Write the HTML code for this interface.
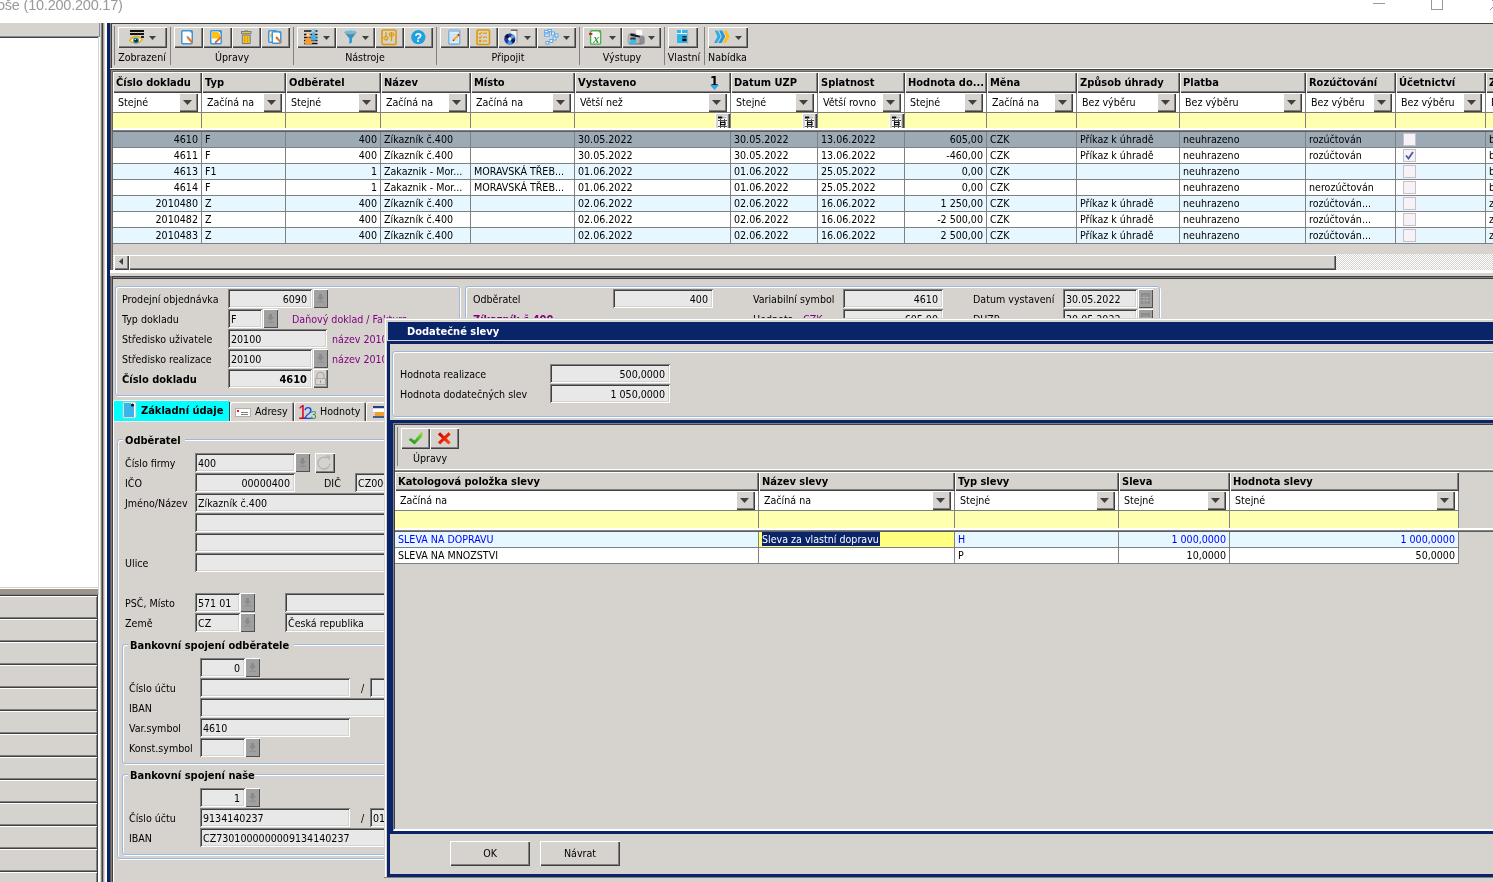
<!DOCTYPE html>
<html><head><meta charset="utf-8"><title>Dodatečné slevy</title>
<style>
html,body{margin:0;padding:0;}
body{width:1493px;height:882px;overflow:hidden;background:#fff;position:relative;
 font-family:"DejaVu Sans Condensed","Liberation Sans",sans-serif;font-size:10.6px;color:#000;}
.a{position:absolute;}
.t{white-space:nowrap;line-height:13px;height:13px;}
svg{display:block;overflow:visible}
</style></head><body>
<div id="root" class="a" style="left:0;top:0;width:1493px;height:882px;overflow:hidden;will-change:transform">

<div class="a" style="left:-3px;top:-6px;font-family:'Liberation Sans',sans-serif;font-size:14.5px;line-height:22px;color:#999;white-space:nowrap;letter-spacing:-0.22px">oše (10.200.200.17)</div>
<div class="a " style="left:1373px;top:3px;width:12px;height:1px;background:#999;"></div>
<div class="a " style="left:1431px;top:-2px;width:12px;height:12px;border:1px solid #999;box-sizing:border-box;"></div>
<svg class="a" style="left:1489px;top:-3px" width="14" height="14"><path d="M1,1 L13,13 M13,1 L1,13" stroke="#999" stroke-width="1" fill="none"/></svg>
<div class="a " style="left:0px;top:23px;width:99px;height:14px;background:#d6d3ce;"></div>
<div class="a " style="left:0px;top:36px;width:100px;height:1px;background:#868aa0;"></div>
<div class="a " style="left:99px;top:23px;width:1px;height:14px;background:#868aa0;"></div>
<div class="a " style="left:0px;top:37px;width:98px;height:550px;background:#fff;"></div>
<div class="a " style="left:0px;top:37px;width:98px;height:1px;background:#404040;"></div>
<div class="a " style="left:0px;top:587px;width:100px;height:1px;background:#d6d3ce;"></div>
<div class="a " style="left:0px;top:588px;width:100px;height:1px;background:#fff;"></div>
<div class="a " style="left:0px;top:589px;width:100px;height:5px;background:#9d958a;"></div>
<div class="a " style="left:0px;top:594px;width:100px;height:1px;background:#808088;"></div>
<div class="a " style="left:0px;top:595px;width:98px;height:23px;background:#d6d3ce;box-shadow: inset 0 1px 0 #404040, inset -1px 0 0 #404040, inset 0 -1px 0 #808080, inset 0 2px 0 #fff, inset -2px 0 0 #808080;"></div>
<div class="a " style="left:0px;top:618px;width:98px;height:23px;background:#d6d3ce;box-shadow: inset 0 1px 0 #404040, inset -1px 0 0 #404040, inset 0 -1px 0 #808080, inset 0 2px 0 #fff, inset -2px 0 0 #808080;"></div>
<div class="a " style="left:0px;top:641px;width:98px;height:23px;background:#d6d3ce;box-shadow: inset 0 1px 0 #404040, inset -1px 0 0 #404040, inset 0 -1px 0 #808080, inset 0 2px 0 #fff, inset -2px 0 0 #808080;"></div>
<div class="a " style="left:0px;top:664px;width:98px;height:23px;background:#d6d3ce;box-shadow: inset 0 1px 0 #404040, inset -1px 0 0 #404040, inset 0 -1px 0 #808080, inset 0 2px 0 #fff, inset -2px 0 0 #808080;"></div>
<div class="a " style="left:0px;top:687px;width:98px;height:23px;background:#d6d3ce;box-shadow: inset 0 1px 0 #404040, inset -1px 0 0 #404040, inset 0 -1px 0 #808080, inset 0 2px 0 #fff, inset -2px 0 0 #808080;"></div>
<div class="a " style="left:0px;top:710px;width:98px;height:23px;background:#d6d3ce;box-shadow: inset 0 1px 0 #404040, inset -1px 0 0 #404040, inset 0 -1px 0 #808080, inset 0 2px 0 #fff, inset -2px 0 0 #808080;"></div>
<div class="a " style="left:0px;top:733px;width:98px;height:23px;background:#d6d3ce;box-shadow: inset 0 1px 0 #404040, inset -1px 0 0 #404040, inset 0 -1px 0 #808080, inset 0 2px 0 #fff, inset -2px 0 0 #808080;"></div>
<div class="a " style="left:0px;top:756px;width:98px;height:23px;background:#d6d3ce;box-shadow: inset 0 1px 0 #404040, inset -1px 0 0 #404040, inset 0 -1px 0 #808080, inset 0 2px 0 #fff, inset -2px 0 0 #808080;"></div>
<div class="a " style="left:0px;top:779px;width:98px;height:23px;background:#d6d3ce;box-shadow: inset 0 1px 0 #404040, inset -1px 0 0 #404040, inset 0 -1px 0 #808080, inset 0 2px 0 #fff, inset -2px 0 0 #808080;"></div>
<div class="a " style="left:0px;top:802px;width:98px;height:23px;background:#d6d3ce;box-shadow: inset 0 1px 0 #404040, inset -1px 0 0 #404040, inset 0 -1px 0 #808080, inset 0 2px 0 #fff, inset -2px 0 0 #808080;"></div>
<div class="a " style="left:0px;top:825px;width:98px;height:23px;background:#d6d3ce;box-shadow: inset 0 1px 0 #404040, inset -1px 0 0 #404040, inset 0 -1px 0 #808080, inset 0 2px 0 #fff, inset -2px 0 0 #808080;"></div>
<div class="a " style="left:0px;top:848px;width:98px;height:23px;background:#d6d3ce;box-shadow: inset 0 1px 0 #404040, inset -1px 0 0 #404040, inset 0 -1px 0 #808080, inset 0 2px 0 #fff, inset -2px 0 0 #808080;"></div>
<div class="a " style="left:0px;top:871px;width:98px;height:23px;background:#d6d3ce;box-shadow: inset 0 1px 0 #404040, inset -1px 0 0 #404040, inset 0 -1px 0 #808080, inset 0 2px 0 #fff, inset -2px 0 0 #808080;"></div>
<div class="a " style="left:0px;top:595px;width:98px;height:1px;background:#404040;"></div>
<div class="a " style="left:98px;top:37px;width:1px;height:558px;background:#d8d5cf;"></div>
<div class="a " style="left:99px;top:37px;width:1px;height:558px;background:#fff;"></div>
<div class="a " style="left:100px;top:23px;width:1px;height:859px;background:#d6d3ce;"></div>
<div class="a " style="left:101px;top:23px;width:1px;height:859px;background:#808080;"></div>
<div class="a " style="left:102px;top:23px;width:1px;height:859px;background:#404040;"></div>
<div class="a " style="left:103px;top:23px;width:1px;height:859px;background:#a8a6a0;"></div>
<div class="a " style="left:104px;top:23px;width:1px;height:859px;background:#d6d3ce;"></div>
<div class="a " style="left:105px;top:23px;width:1px;height:859px;background:#fff;"></div>
<div class="a " style="left:106px;top:23px;width:1px;height:859px;background:#fff8f0;"></div>
<div class="a " style="left:107px;top:23px;width:3px;height:859px;background:#0a246a;"></div>
<div class="a " style="left:110px;top:23px;width:1383px;height:859px;background:#d6d3ce;"></div>
<div class="a " style="left:110px;top:23px;width:1383px;height:1px;background:#404040;"></div>
<div class="a " style="left:110px;top:23px;width:1px;height:45px;background:#808080;"></div>
<div class="a " style="left:111px;top:23px;width:1px;height:45px;background:#404040;"></div>
<div class="a " style="left:114px;top:26px;width:1px;height:39px;background:#808080;"></div>
<div class="a " style="left:118px;top:27px;width:49px;height:21px;background:#d6d3ce;box-shadow: inset 1px 1px 0 #fff, inset -1px -1px 0 #404040, inset -2px -2px 0 #808080;"></div>
<svg class="a" style="left:149px;top:36px" width="7" height="4"><polygon points="0,0 7,0 3.5,4" fill="#404040"/></svg>
<div class="a " style="left:170px;top:27px;width:1px;height:38px;background:#808080;"></div>
<div class="a " style="left:174px;top:27px;width:29px;height:21px;background:#d6d3ce;box-shadow: inset 1px 1px 0 #fff, inset -1px -1px 0 #404040, inset -2px -2px 0 #808080;"></div>
<div class="a " style="left:203px;top:27px;width:29px;height:21px;background:#d6d3ce;box-shadow: inset 1px 1px 0 #fff, inset -1px -1px 0 #404040, inset -2px -2px 0 #808080;"></div>
<div class="a " style="left:232px;top:27px;width:29px;height:21px;background:#d6d3ce;box-shadow: inset 1px 1px 0 #fff, inset -1px -1px 0 #404040, inset -2px -2px 0 #808080;"></div>
<div class="a " style="left:261px;top:27px;width:29px;height:21px;background:#d6d3ce;box-shadow: inset 1px 1px 0 #fff, inset -1px -1px 0 #404040, inset -2px -2px 0 #808080;"></div>
<div class="a " style="left:293px;top:27px;width:1px;height:38px;background:#808080;"></div>
<div class="a " style="left:297px;top:27px;width:39px;height:21px;background:#d6d3ce;box-shadow: inset 1px 1px 0 #fff, inset -1px -1px 0 #404040, inset -2px -2px 0 #808080;"></div>
<svg class="a" style="left:323px;top:36px" width="7" height="4"><polygon points="0,0 7,0 3.5,4" fill="#404040"/></svg>
<div class="a " style="left:336px;top:27px;width:39px;height:21px;background:#d6d3ce;box-shadow: inset 1px 1px 0 #fff, inset -1px -1px 0 #404040, inset -2px -2px 0 #808080;"></div>
<svg class="a" style="left:362px;top:36px" width="7" height="4"><polygon points="0,0 7,0 3.5,4" fill="#404040"/></svg>
<div class="a " style="left:375px;top:27px;width:29px;height:21px;background:#d6d3ce;box-shadow: inset 1px 1px 0 #fff, inset -1px -1px 0 #404040, inset -2px -2px 0 #808080;"></div>
<div class="a " style="left:404px;top:27px;width:29px;height:21px;background:#d6d3ce;box-shadow: inset 1px 1px 0 #fff, inset -1px -1px 0 #404040, inset -2px -2px 0 #808080;"></div>
<div class="a " style="left:436px;top:27px;width:1px;height:38px;background:#808080;"></div>
<div class="a " style="left:440px;top:27px;width:29px;height:21px;background:#d6d3ce;box-shadow: inset 1px 1px 0 #fff, inset -1px -1px 0 #404040, inset -2px -2px 0 #808080;"></div>
<div class="a " style="left:469px;top:27px;width:29px;height:21px;background:#d6d3ce;box-shadow: inset 1px 1px 0 #fff, inset -1px -1px 0 #404040, inset -2px -2px 0 #808080;"></div>
<div class="a " style="left:498px;top:27px;width:39px;height:21px;background:#d6d3ce;box-shadow: inset 1px 1px 0 #fff, inset -1px -1px 0 #404040, inset -2px -2px 0 #808080;"></div>
<svg class="a" style="left:524px;top:36px" width="7" height="4"><polygon points="0,0 7,0 3.5,4" fill="#404040"/></svg>
<div class="a " style="left:537px;top:27px;width:39px;height:21px;background:#d6d3ce;box-shadow: inset 1px 1px 0 #fff, inset -1px -1px 0 #404040, inset -2px -2px 0 #808080;"></div>
<svg class="a" style="left:563px;top:36px" width="7" height="4"><polygon points="0,0 7,0 3.5,4" fill="#404040"/></svg>
<div class="a " style="left:579px;top:27px;width:1px;height:38px;background:#808080;"></div>
<div class="a " style="left:583px;top:27px;width:39px;height:21px;background:#d6d3ce;box-shadow: inset 1px 1px 0 #fff, inset -1px -1px 0 #404040, inset -2px -2px 0 #808080;"></div>
<svg class="a" style="left:609px;top:36px" width="7" height="4"><polygon points="0,0 7,0 3.5,4" fill="#404040"/></svg>
<div class="a " style="left:622px;top:27px;width:39px;height:21px;background:#d6d3ce;box-shadow: inset 1px 1px 0 #fff, inset -1px -1px 0 #404040, inset -2px -2px 0 #808080;"></div>
<svg class="a" style="left:648px;top:36px" width="7" height="4"><polygon points="0,0 7,0 3.5,4" fill="#404040"/></svg>
<div class="a " style="left:664px;top:27px;width:1px;height:38px;background:#808080;"></div>
<div class="a " style="left:668px;top:27px;width:30px;height:21px;background:#d6d3ce;box-shadow: inset 1px 1px 0 #fff, inset -1px -1px 0 #404040, inset -2px -2px 0 #808080;"></div>
<div class="a " style="left:704px;top:27px;width:1px;height:38px;background:#808080;"></div>
<div class="a " style="left:708px;top:27px;width:40px;height:21px;background:#d6d3ce;box-shadow: inset 1px 1px 0 #fff, inset -1px -1px 0 #404040, inset -2px -2px 0 #808080;"></div>
<svg class="a" style="left:735px;top:36px" width="7" height="4"><polygon points="0,0 7,0 3.5,4" fill="#404040"/></svg>
<div class="a t" style="top:51px;left:-8px;width:300px;text-align:center;">Zobrazení</div>
<div class="a t" style="top:51px;left:82px;width:300px;text-align:center;">Úpravy</div>
<div class="a t" style="top:51px;left:215px;width:300px;text-align:center;">Nástroje</div>
<div class="a t" style="top:51px;left:358px;width:300px;text-align:center;">Připojit</div>
<div class="a t" style="top:51px;left:472px;width:300px;text-align:center;">Výstupy</div>
<div class="a t" style="top:51px;left:534px;width:300px;text-align:center;">Vlastní</div>
<div class="a t" style="top:51px;left:577.5px;width:300px;text-align:center;">Nabídka</div>
<svg class="a" style="left:129px;top:30px" width="16" height="16" viewBox="0 0 16 16"><rect x="1" y="0" width="14" height="2" fill="#111"/><rect x="1" y="3" width="14" height="2" fill="#111"/><rect x="12" y="6" width="3" height="2" fill="#222"/><path d="M0.5,10.5 Q7,3.5 13.5,9.5 Q7,17 0.5,10.5 Z" fill="#fff4c0" stroke="#e0b020" stroke-width="1.2"/><path d="M1,8.5 Q6,4.5 11,7" fill="none" stroke="#e0b020" stroke-width="1"/><circle cx="7" cy="10.5" r="3" fill="#2a88b8"/><circle cx="7" cy="10.5" r="1.6" fill="#081018"/><circle cx="6.3" cy="9.6" r="0.7" fill="#fff"/></svg>
<svg class="a" style="left:181px;top:30px" width="13" height="15" viewBox="0 0 13 15"><rect x="0.75" y="0.75" width="10.5" height="13" rx="1.2" fill="#fff" stroke="#3d95dc" stroke-width="1.5"/><polygon points="8,0.5 11.5,0.5 11.5,4" fill="#3d95dc"/><polygon points="8,1 8,4 11,4" fill="#eaf4fc"/><path d="M6.5,7 L11.5,13" stroke="#e8741c" stroke-width="2"/><path d="M5.8,6.2 L7,7.6" stroke="#c8a060" stroke-width="1.6"/></svg>
<svg class="a" style="left:210px;top:30px" width="13" height="15" viewBox="0 0 13 15"><rect x="0.75" y="0.75" width="10.5" height="13" rx="1.2" fill="#fff" stroke="#3d95dc" stroke-width="1.5"/><path d="M2,2 H8 L10,4 V8.5 H2 Z" fill="#ffc210"/><polygon points="8,0.5 11.5,0.5 11.5,4" fill="#3d95dc"/><path d="M11,7 L6,12" stroke="#e8741c" stroke-width="2"/><path d="M5.2,12.8 L6.4,11.6" stroke="#806040" stroke-width="1.4"/></svg>
<svg class="a" style="left:241px;top:30px" width="11" height="15" viewBox="0 0 11 15"><rect x="3.5" y="0" width="3.5" height="1.6" fill="#e0a800"/><rect x="0.5" y="1.5" width="9.5" height="2.2" fill="#ffc210" stroke="#5a7cb4" stroke-width="0.9"/><path d="M1.3,5 H9.2 V13.6 H1.3 Z" fill="#ffc210" stroke="#5a7cb4" stroke-width="1"/><path d="M3.9,6.2 V12.5 M6.6,6.2 V12.5" stroke="#d89a00" stroke-width="0.9"/></svg>
<svg class="a" style="left:268px;top:30px" width="14" height="15" viewBox="0 0 14 15"><rect x="0.75" y="0.75" width="8" height="11.5" rx="1" fill="#fff" stroke="#3d95dc" stroke-width="1.5"/><rect x="1.6" y="3.5" width="2" height="4" fill="#ffd040"/><rect x="4.25" y="1.75" width="8.5" height="11.5" rx="1" fill="#fff" stroke="#3d95dc" stroke-width="1.5"/><polygon points="10,1.5 13,1.5 13,4.5" fill="#3d95dc"/><path d="M8.5,7.5 L13,12.5" stroke="#e8741c" stroke-width="1.9"/><path d="M8,7 L9,8" stroke="#806040" stroke-width="1.4"/></svg>
<svg class="a" style="left:303px;top:29px" width="16" height="16" viewBox="0 0 16 16"><path d="M1,2 H14.5 M1,5.5 H14.5 M1,8.5 H14.5 M1,11.5 H14.5 M1,14.5 H14.5" stroke="#111" stroke-width="1.4"/><circle cx="10.5" cy="2.4" r="2.3" fill="#6fc0ea"/><path d="M7.3,11 Q7.6,4.5 10.5,4.5 Q13.4,4.5 13.8,11 Q10.5,12.4 7.3,11 Z" fill="#48aee4"/><circle cx="5.3" cy="6.2" r="2.3" fill="#ffb060"/><path d="M1.6,15 Q2.2,8.3 5.3,8.3 Q8.4,8.3 9,15 Z" fill="#ff9a2e"/><circle cx="4.8" cy="5.6" r="0.9" fill="#fff"/><circle cx="10" cy="1.8" r="0.8" fill="#fff" opacity=".8"/></svg>
<svg class="a" style="left:344px;top:30px" width="13" height="15" viewBox="0 0 13 15"><path d="M0.3,2.2 Q6.5,-0.8 12.7,2.2 L7.9,8.5 V12.5 L5.4,14 V8.5 Z" fill="#2c92d4"/><ellipse cx="6.5" cy="2.3" rx="6" ry="1.7" fill="#63bdf0"/><path d="M1,3.2 Q6.5,5 12,3.2" fill="none" stroke="#e0a030" stroke-width="0.8"/></svg>
<svg class="a" style="left:381px;top:29px" width="16" height="17" viewBox="0 0 16 17"><rect x="1" y="1" width="14" height="14.5" rx="1.5" fill="none" stroke="#e09a00" stroke-width="1.6"/><path d="M5,3 V8 M10.5,3 V12" stroke="#e09a00" stroke-width="1.3"/><ellipse cx="5" cy="9" rx="2.2" ry="1.4" fill="none" stroke="#e09a00" stroke-width="1.1"/><path d="M3.6,10.5 L5,12.3 L6.4,10.5" fill="#e09a00"/><ellipse cx="10.5" cy="5.4" rx="2.2" ry="1.6" fill="none" stroke="#e09a00" stroke-width="1.1"/></svg>
<svg class="a" style="left:411px;top:30px" width="15" height="15" viewBox="0 0 15 15"><circle cx="7.3" cy="7.2" r="7.1" fill="#1fa0e2"/><text x="7.3" y="11.6" text-anchor="middle" font-family="Liberation Sans,sans-serif" font-weight="bold" font-size="12.5" fill="#fff">?</text></svg>
<svg class="a" style="left:448px;top:29px" width="13" height="16" viewBox="0 0 13 16"><rect x="0.8" y="1.2" width="11" height="14" rx="1.2" fill="#dcecfc" stroke="#6aa8e0" stroke-width="1.2"/><rect x="1.5" y="1" width="9.6" height="2" fill="#9cc4ec"/><path d="M2.5,6 H10 M2.5,8.5 H10 M2.5,11 H10" stroke="#b8d4f0" stroke-width="0.8"/><path d="M10.6,6 L5.6,11" stroke="#f6b418" stroke-width="2.2"/><path d="M11.2,5.4 L10,6.6" stroke="#d03030" stroke-width="2.2"/><path d="M5,11.7 L5.8,10.8" stroke="#604020" stroke-width="1.4"/></svg>
<svg class="a" style="left:476px;top:29px" width="15" height="17" viewBox="0 0 15 17"><rect x="1" y="1" width="12.5" height="14.5" rx="1.2" fill="none" stroke="#e09a00" stroke-width="1.6"/><path d="M6.8,4.3 H11 M6.8,8.2 H11 M6.8,12.1 H11" stroke="#e8a820" stroke-width="1.5"/><path d="M2.8,4 L4,5.3 L5.8,3 M2.8,8 L4,9.3 L5.8,7" stroke="#e09a00" stroke-width="1.1" fill="none"/><circle cx="4.2" cy="12.1" r="1.4" fill="#e09a00"/></svg>
<svg class="a" style="left:504px;top:29px" width="16" height="16" viewBox="0 0 16 16"><path d="M6,1 H13.5 V14 H9 Z" fill="#f2f2f2" stroke="#c0c0c0" stroke-width="0.8"/><rect x="12.3" y="2" width="1.4" height="12" fill="#b0b0b0"/><path d="M7,1.2 H13.5" stroke="#303030" stroke-width="1"/><circle cx="5.8" cy="10" r="5.6" fill="#1a3c9c"/><path d="M5.8,10 L0.5,8 A5.6,5.6 0 0 1 4,4.7 Z" fill="#0a1440"/><path d="M5.8,10 L8,4.9 A5.6,5.6 0 0 1 11.2,8.4 Z" fill="#58a8e8"/><path d="M5.8,10 L3,14.8 A5.6,5.6 0 0 0 8.5,14.9 Z" fill="#4a9ce0"/><path d="M5.8,10 L11.3,11 A5.6,5.6 0 0 1 9.5,14.2 Z" fill="#101850"/><circle cx="5.8" cy="10" r="1.7" fill="#fff8d8"/></svg>
<svg class="a" style="left:544px;top:29px" width="15" height="16" viewBox="0 0 15 16"><g fill="#eaf4ff" stroke="#5aa4e8" stroke-width="0.9"><rect x="0.5" y="1.5" width="5" height="2.2"/><rect x="0.5" y="5" width="5" height="2.2"/><rect x="4" y="0.5" width="3.5" height="2"/><rect x="7.5" y="3" width="3" height="3"/><rect x="11" y="5" width="3" height="3"/><rect x="9" y="8" width="3" height="3"/><rect x="5.8" y="10.5" width="3" height="3"/><rect x="2" y="12.5" width="2.8" height="2.6"/></g></svg>
<svg class="a" style="left:589px;top:30px" width="13" height="15" viewBox="0 0 13 15"><rect x="1.6" y="0.7" width="10" height="13.4" rx="1.2" fill="#fff" stroke="#4cae4c" stroke-width="1.4"/><polygon points="8.5,0.5 12,0.5 12,4" fill="#4cae4c"/><polygon points="8.5,1 8.5,4 11.5,4" fill="#e8f6e8"/><rect x="0" y="3" width="3.4" height="1.8" fill="#e01010"/><text x="7.2" y="12.6" text-anchor="middle" font-family="Liberation Serif,serif" font-weight="bold" font-style="italic" font-size="12" fill="#2e9a3a">x</text></svg>
<svg class="a" style="left:627px;top:28px" width="18" height="17" viewBox="0 0 18 17"><polygon points="8.3,1.2 15.6,1.6 15.9,8 8.6,7.4" fill="#fbfbfd" stroke="#c4c4cc" stroke-width="0.6"/><path d="M1,9 Q1,5.6 4,5.6 L8.5,5.6 L9,7.6 L16,7.9 Q17.4,8.1 17.4,10 V14.6 Q17.4,16.3 15.5,16.3 H3 Q1,16.3 1,14.6 Z" fill="#b6b6ba" stroke="#9a9aa2" stroke-width="0.7"/><path d="M12.4,8.2 L16,7.9 Q17.4,8.1 17.4,10 V14.6 Q17.4,16.3 15.5,16.3 H12.4 Z" fill="#8a8a90"/><path d="M3.2,6.6 Q3.4,5.3 5,5.6 L12.4,7.8 Q13.4,8.4 12.8,9.6 L4,7.9 Q3,7.5 3.2,6.6 Z" fill="#1a1a1a"/><rect x="3.4" y="9.6" width="5.2" height="2.2" fill="#2c2c2c"/><path d="M2.2,15.4 H14 V16.3 H3 Z" fill="#707078"/><polygon points="4.6,11.2 9.7,12 8,16.4 1.8,15.3" fill="#30bef0"/></svg>
<svg class="a" style="left:677px;top:30px" width="12" height="14" viewBox="0 0 12 14"><rect x="0" y="0" width="11" height="14" fill="#2cb8ea"/><rect x="10" y="1" width="1.2" height="13" fill="#b0b0b0"/><path d="M0,3.6 H10 M4.5,0 V3.6" stroke="#fff" stroke-width="1"/><path d="M0,13.6 H10" stroke="#ffe0e0" stroke-width="0.8"/><rect x="5.3" y="6" width="4.2" height="1.6" fill="#0a3040"/><rect x="5.3" y="8.6" width="4.2" height="2.6" fill="#05080c"/></svg>
<svg class="a" style="left:714px;top:30px" width="16" height="14" viewBox="0 0 16 14"><polygon points="0.8,0.5 3.8,0.5 6.8,6.6 3.2,13 0,13 3.4,6.6" fill="#2aaeea"/><polygon points="5.2,0.5 8.2,0.5 11.2,6.6 7.6000000000000005,13 4.4,13 7.800000000000001,6.6" fill="#2398dc"/><polygon points="9.600000000000001,0.5 12.600000000000001,0.5 15.600000000000001,6.6 12.0,13 8.8,13 12.200000000000001,6.6" fill="#ffc116"/></svg>
<div class="a " style="left:110px;top:68px;width:1383px;height:1px;background:#fff;"></div>
<div class="a " style="left:111px;top:69px;width:1382px;height:1px;background:#404040;"></div>
<div class="a " style="left:111px;top:70px;width:1382px;height:1px;background:#908e88;"></div>
<div class="a " style="left:111px;top:71px;width:1382px;height:1px;background:#646864;"></div>
<div class="a " style="left:110px;top:69px;width:1px;height:201px;background:#404040;"></div>
<div class="a " style="left:111px;top:70px;width:1px;height:200px;background:#908e88;"></div>
<div class="a " style="left:112px;top:71px;width:1px;height:199px;background:#646864;"></div>
<div class="a " style="left:113px;top:72px;width:89px;height:21px;background:#d6d3ce;box-shadow: inset 1px 1px 0 #fff, inset -1px -1px 0 #404040, inset -2px -2px 0 #808080;"></div>
<div class="a t" style="top:76px;left:116px;font-weight:bold;font-size:11px;">Číslo dokladu</div>
<div class="a " style="left:202px;top:72px;width:84px;height:21px;background:#d6d3ce;box-shadow: inset 1px 1px 0 #fff, inset -1px -1px 0 #404040, inset -2px -2px 0 #808080;"></div>
<div class="a t" style="top:76px;left:205px;font-weight:bold;font-size:11px;">Typ</div>
<div class="a " style="left:286px;top:72px;width:95px;height:21px;background:#d6d3ce;box-shadow: inset 1px 1px 0 #fff, inset -1px -1px 0 #404040, inset -2px -2px 0 #808080;"></div>
<div class="a t" style="top:76px;left:289px;font-weight:bold;font-size:11px;">Odběratel</div>
<div class="a " style="left:381px;top:72px;width:90px;height:21px;background:#d6d3ce;box-shadow: inset 1px 1px 0 #fff, inset -1px -1px 0 #404040, inset -2px -2px 0 #808080;"></div>
<div class="a t" style="top:76px;left:384px;font-weight:bold;font-size:11px;">Název</div>
<div class="a " style="left:471px;top:72px;width:104px;height:21px;background:#d6d3ce;box-shadow: inset 1px 1px 0 #fff, inset -1px -1px 0 #404040, inset -2px -2px 0 #808080;"></div>
<div class="a t" style="top:76px;left:474px;font-weight:bold;font-size:11px;">Místo</div>
<div class="a " style="left:575px;top:72px;width:156px;height:21px;background:#d6d3ce;box-shadow: inset 1px 1px 0 #fff, inset -1px -1px 0 #404040, inset -2px -2px 0 #808080;"></div>
<div class="a t" style="top:76px;left:578px;font-weight:bold;font-size:11px;">Vystaveno</div>
<div class="a " style="left:731px;top:72px;width:87px;height:21px;background:#d6d3ce;box-shadow: inset 1px 1px 0 #fff, inset -1px -1px 0 #404040, inset -2px -2px 0 #808080;"></div>
<div class="a t" style="top:76px;left:734px;font-weight:bold;font-size:11px;">Datum UZP</div>
<div class="a " style="left:818px;top:72px;width:87px;height:21px;background:#d6d3ce;box-shadow: inset 1px 1px 0 #fff, inset -1px -1px 0 #404040, inset -2px -2px 0 #808080;"></div>
<div class="a t" style="top:76px;left:821px;font-weight:bold;font-size:11px;">Splatnost</div>
<div class="a " style="left:905px;top:72px;width:82px;height:21px;background:#d6d3ce;box-shadow: inset 1px 1px 0 #fff, inset -1px -1px 0 #404040, inset -2px -2px 0 #808080;"></div>
<div class="a t" style="top:76px;left:908px;font-weight:bold;font-size:11px;">Hodnota do...</div>
<div class="a " style="left:987px;top:72px;width:90px;height:21px;background:#d6d3ce;box-shadow: inset 1px 1px 0 #fff, inset -1px -1px 0 #404040, inset -2px -2px 0 #808080;"></div>
<div class="a t" style="top:76px;left:990px;font-weight:bold;font-size:11px;">Měna</div>
<div class="a " style="left:1077px;top:72px;width:103px;height:21px;background:#d6d3ce;box-shadow: inset 1px 1px 0 #fff, inset -1px -1px 0 #404040, inset -2px -2px 0 #808080;"></div>
<div class="a t" style="top:76px;left:1080px;font-weight:bold;font-size:11px;">Způsob úhrady</div>
<div class="a " style="left:1180px;top:72px;width:126px;height:21px;background:#d6d3ce;box-shadow: inset 1px 1px 0 #fff, inset -1px -1px 0 #404040, inset -2px -2px 0 #808080;"></div>
<div class="a t" style="top:76px;left:1183px;font-weight:bold;font-size:11px;">Platba</div>
<div class="a " style="left:1306px;top:72px;width:90px;height:21px;background:#d6d3ce;box-shadow: inset 1px 1px 0 #fff, inset -1px -1px 0 #404040, inset -2px -2px 0 #808080;"></div>
<div class="a t" style="top:76px;left:1309px;font-weight:bold;font-size:11px;">Rozúčtování</div>
<div class="a " style="left:1396px;top:72px;width:90px;height:21px;background:#d6d3ce;box-shadow: inset 1px 1px 0 #fff, inset -1px -1px 0 #404040, inset -2px -2px 0 #808080;"></div>
<div class="a t" style="top:76px;left:1399px;font-weight:bold;font-size:11px;">Účetnictví</div>
<div class="a " style="left:1486px;top:72px;width:115px;height:21px;background:#d6d3ce;box-shadow: inset 1px 1px 0 #fff, inset -1px -1px 0 #404040, inset -2px -2px 0 #808080;"></div>
<div class="a t" style="top:76px;left:1489px;font-weight:bold;font-size:11px;">Z</div>
<div class="a " style="left:113px;top:93px;width:88px;height:19px;background:#fff;"></div>
<div class="a " style="left:201px;top:93px;width:1px;height:19px;background:#808080;"></div>
<div class="a t" style="top:96px;left:118px;">Stejné</div>
<div class="a " style="left:179px;top:93px;width:19px;height:19px;background:#d6d3ce;box-shadow: inset 1px 1px 0 #fff, inset -1px -1px 0 #404040, inset -2px -2px 0 #808080;"></div>
<svg class="a" style="left:183px;top:100px" width="9" height="5"><polygon points="0,0 9,0 4.5,5" fill="#404040"/></svg>
<div class="a " style="left:202px;top:93px;width:83px;height:19px;background:#fff;"></div>
<div class="a " style="left:285px;top:93px;width:1px;height:19px;background:#808080;"></div>
<div class="a t" style="top:96px;left:207px;">Začíná na</div>
<div class="a " style="left:263px;top:93px;width:19px;height:19px;background:#d6d3ce;box-shadow: inset 1px 1px 0 #fff, inset -1px -1px 0 #404040, inset -2px -2px 0 #808080;"></div>
<svg class="a" style="left:267px;top:100px" width="9" height="5"><polygon points="0,0 9,0 4.5,5" fill="#404040"/></svg>
<div class="a " style="left:286px;top:93px;width:94px;height:19px;background:#fff;"></div>
<div class="a " style="left:380px;top:93px;width:1px;height:19px;background:#808080;"></div>
<div class="a t" style="top:96px;left:291px;">Stejné</div>
<div class="a " style="left:358px;top:93px;width:19px;height:19px;background:#d6d3ce;box-shadow: inset 1px 1px 0 #fff, inset -1px -1px 0 #404040, inset -2px -2px 0 #808080;"></div>
<svg class="a" style="left:362px;top:100px" width="9" height="5"><polygon points="0,0 9,0 4.5,5" fill="#404040"/></svg>
<div class="a " style="left:381px;top:93px;width:89px;height:19px;background:#fff;"></div>
<div class="a " style="left:470px;top:93px;width:1px;height:19px;background:#808080;"></div>
<div class="a t" style="top:96px;left:386px;">Začíná na</div>
<div class="a " style="left:448px;top:93px;width:19px;height:19px;background:#d6d3ce;box-shadow: inset 1px 1px 0 #fff, inset -1px -1px 0 #404040, inset -2px -2px 0 #808080;"></div>
<svg class="a" style="left:452px;top:100px" width="9" height="5"><polygon points="0,0 9,0 4.5,5" fill="#404040"/></svg>
<div class="a " style="left:471px;top:93px;width:103px;height:19px;background:#fff;"></div>
<div class="a " style="left:574px;top:93px;width:1px;height:19px;background:#808080;"></div>
<div class="a t" style="top:96px;left:476px;">Začíná na</div>
<div class="a " style="left:552px;top:93px;width:19px;height:19px;background:#d6d3ce;box-shadow: inset 1px 1px 0 #fff, inset -1px -1px 0 #404040, inset -2px -2px 0 #808080;"></div>
<svg class="a" style="left:556px;top:100px" width="9" height="5"><polygon points="0,0 9,0 4.5,5" fill="#404040"/></svg>
<div class="a " style="left:575px;top:93px;width:155px;height:19px;background:#fff;"></div>
<div class="a " style="left:730px;top:93px;width:1px;height:19px;background:#808080;"></div>
<div class="a t" style="top:96px;left:580px;">Větší než</div>
<div class="a " style="left:708px;top:93px;width:19px;height:19px;background:#d6d3ce;box-shadow: inset 1px 1px 0 #fff, inset -1px -1px 0 #404040, inset -2px -2px 0 #808080;"></div>
<svg class="a" style="left:712px;top:100px" width="9" height="5"><polygon points="0,0 9,0 4.5,5" fill="#404040"/></svg>
<div class="a " style="left:731px;top:93px;width:86px;height:19px;background:#fff;"></div>
<div class="a " style="left:817px;top:93px;width:1px;height:19px;background:#808080;"></div>
<div class="a t" style="top:96px;left:736px;">Stejné</div>
<div class="a " style="left:795px;top:93px;width:19px;height:19px;background:#d6d3ce;box-shadow: inset 1px 1px 0 #fff, inset -1px -1px 0 #404040, inset -2px -2px 0 #808080;"></div>
<svg class="a" style="left:799px;top:100px" width="9" height="5"><polygon points="0,0 9,0 4.5,5" fill="#404040"/></svg>
<div class="a " style="left:818px;top:93px;width:86px;height:19px;background:#fff;"></div>
<div class="a " style="left:904px;top:93px;width:1px;height:19px;background:#808080;"></div>
<div class="a t" style="top:96px;left:823px;">Větší rovno</div>
<div class="a " style="left:882px;top:93px;width:19px;height:19px;background:#d6d3ce;box-shadow: inset 1px 1px 0 #fff, inset -1px -1px 0 #404040, inset -2px -2px 0 #808080;"></div>
<svg class="a" style="left:886px;top:100px" width="9" height="5"><polygon points="0,0 9,0 4.5,5" fill="#404040"/></svg>
<div class="a " style="left:905px;top:93px;width:81px;height:19px;background:#fff;"></div>
<div class="a " style="left:986px;top:93px;width:1px;height:19px;background:#808080;"></div>
<div class="a t" style="top:96px;left:910px;">Stejné</div>
<div class="a " style="left:964px;top:93px;width:19px;height:19px;background:#d6d3ce;box-shadow: inset 1px 1px 0 #fff, inset -1px -1px 0 #404040, inset -2px -2px 0 #808080;"></div>
<svg class="a" style="left:968px;top:100px" width="9" height="5"><polygon points="0,0 9,0 4.5,5" fill="#404040"/></svg>
<div class="a " style="left:987px;top:93px;width:89px;height:19px;background:#fff;"></div>
<div class="a " style="left:1076px;top:93px;width:1px;height:19px;background:#808080;"></div>
<div class="a t" style="top:96px;left:992px;">Začíná na</div>
<div class="a " style="left:1054px;top:93px;width:19px;height:19px;background:#d6d3ce;box-shadow: inset 1px 1px 0 #fff, inset -1px -1px 0 #404040, inset -2px -2px 0 #808080;"></div>
<svg class="a" style="left:1058px;top:100px" width="9" height="5"><polygon points="0,0 9,0 4.5,5" fill="#404040"/></svg>
<div class="a " style="left:1077px;top:93px;width:102px;height:19px;background:#fff;"></div>
<div class="a " style="left:1179px;top:93px;width:1px;height:19px;background:#808080;"></div>
<div class="a t" style="top:96px;left:1082px;">Bez výběru</div>
<div class="a " style="left:1157px;top:93px;width:19px;height:19px;background:#d6d3ce;box-shadow: inset 1px 1px 0 #fff, inset -1px -1px 0 #404040, inset -2px -2px 0 #808080;"></div>
<svg class="a" style="left:1161px;top:100px" width="9" height="5"><polygon points="0,0 9,0 4.5,5" fill="#404040"/></svg>
<div class="a " style="left:1180px;top:93px;width:125px;height:19px;background:#fff;"></div>
<div class="a " style="left:1305px;top:93px;width:1px;height:19px;background:#808080;"></div>
<div class="a t" style="top:96px;left:1185px;">Bez výběru</div>
<div class="a " style="left:1283px;top:93px;width:19px;height:19px;background:#d6d3ce;box-shadow: inset 1px 1px 0 #fff, inset -1px -1px 0 #404040, inset -2px -2px 0 #808080;"></div>
<svg class="a" style="left:1287px;top:100px" width="9" height="5"><polygon points="0,0 9,0 4.5,5" fill="#404040"/></svg>
<div class="a " style="left:1306px;top:93px;width:89px;height:19px;background:#fff;"></div>
<div class="a " style="left:1395px;top:93px;width:1px;height:19px;background:#808080;"></div>
<div class="a t" style="top:96px;left:1311px;">Bez výběru</div>
<div class="a " style="left:1373px;top:93px;width:19px;height:19px;background:#d6d3ce;box-shadow: inset 1px 1px 0 #fff, inset -1px -1px 0 #404040, inset -2px -2px 0 #808080;"></div>
<svg class="a" style="left:1377px;top:100px" width="9" height="5"><polygon points="0,0 9,0 4.5,5" fill="#404040"/></svg>
<div class="a " style="left:1396px;top:93px;width:89px;height:19px;background:#fff;"></div>
<div class="a " style="left:1485px;top:93px;width:1px;height:19px;background:#808080;"></div>
<div class="a t" style="top:96px;left:1401px;">Bez výběru</div>
<div class="a " style="left:1463px;top:93px;width:19px;height:19px;background:#d6d3ce;box-shadow: inset 1px 1px 0 #fff, inset -1px -1px 0 #404040, inset -2px -2px 0 #808080;"></div>
<svg class="a" style="left:1467px;top:100px" width="9" height="5"><polygon points="0,0 9,0 4.5,5" fill="#404040"/></svg>
<div class="a " style="left:1486px;top:93px;width:114px;height:19px;background:#fff;"></div>
<div class="a " style="left:1600px;top:93px;width:1px;height:19px;background:#808080;"></div>
<div class="a t" style="top:96px;left:1491px;">B</div>
<div class="a t" style="top:75px;left:710px;font-weight:bold;font-size:13.7px;">1</div>
<svg class="a" style="left:710px;top:85px" width="9" height="5"><polygon points="0,0 9,0 4.5,5" fill="#2aa8f0"/></svg>
<div class="a " style="left:113px;top:112px;width:1380px;height:1px;background:#808080;"></div>
<div class="a " style="left:113px;top:113px;width:1380px;height:15px;background:#ffffb0;"></div>
<div class="a " style="left:201px;top:113px;width:1px;height:15px;background:#808080;"></div>
<div class="a " style="left:285px;top:113px;width:1px;height:15px;background:#808080;"></div>
<div class="a " style="left:380px;top:113px;width:1px;height:15px;background:#808080;"></div>
<div class="a " style="left:470px;top:113px;width:1px;height:15px;background:#808080;"></div>
<div class="a " style="left:574px;top:113px;width:1px;height:15px;background:#808080;"></div>
<div class="a " style="left:730px;top:113px;width:1px;height:15px;background:#808080;"></div>
<div class="a " style="left:817px;top:113px;width:1px;height:15px;background:#808080;"></div>
<div class="a " style="left:904px;top:113px;width:1px;height:15px;background:#808080;"></div>
<div class="a " style="left:986px;top:113px;width:1px;height:15px;background:#808080;"></div>
<div class="a " style="left:1076px;top:113px;width:1px;height:15px;background:#808080;"></div>
<div class="a " style="left:1179px;top:113px;width:1px;height:15px;background:#808080;"></div>
<div class="a " style="left:1305px;top:113px;width:1px;height:15px;background:#808080;"></div>
<div class="a " style="left:1395px;top:113px;width:1px;height:15px;background:#808080;"></div>
<div class="a " style="left:1485px;top:113px;width:1px;height:15px;background:#808080;"></div>
<div class="a " style="left:1600px;top:113px;width:1px;height:15px;background:#808080;"></div>
<div class="a " style="left:715px;top:113px;width:15px;height:15px;background:#d6d3ce;box-shadow: inset 1px 1px 0 #fff, inset -1px 0 0 #404040, inset -2px 0 0 #808080;"></div>
<svg class="a" style="left:718px;top:116px" width="9" height="12"><rect x="0" y="0" width="9" height="12" fill="#fff"/><rect x="0" y="0.5" width="4.5" height="2" fill="#000"/><rect x="4.5" y="0.5" width="4" height="2" fill="#b8b8b8"/><path d="M0,4.5 H9 M0,10.5 H9 M2.5,3 V12 M6.5,3 V12" stroke="#505050" stroke-width="1" fill="none"/><rect x="2.5" y="6.3" width="4.5" height="2.4" fill="#fff" stroke="#000" stroke-width="1.2"/></svg>
<div class="a " style="left:802px;top:113px;width:15px;height:15px;background:#d6d3ce;box-shadow: inset 1px 1px 0 #fff, inset -1px 0 0 #404040, inset -2px 0 0 #808080;"></div>
<svg class="a" style="left:805px;top:116px" width="9" height="12"><rect x="0" y="0" width="9" height="12" fill="#fff"/><rect x="0" y="0.5" width="4.5" height="2" fill="#000"/><rect x="4.5" y="0.5" width="4" height="2" fill="#b8b8b8"/><path d="M0,4.5 H9 M0,10.5 H9 M2.5,3 V12 M6.5,3 V12" stroke="#505050" stroke-width="1" fill="none"/><rect x="2.5" y="6.3" width="4.5" height="2.4" fill="#fff" stroke="#000" stroke-width="1.2"/></svg>
<div class="a " style="left:889px;top:113px;width:15px;height:15px;background:#d6d3ce;box-shadow: inset 1px 1px 0 #fff, inset -1px 0 0 #404040, inset -2px 0 0 #808080;"></div>
<svg class="a" style="left:892px;top:116px" width="9" height="12"><rect x="0" y="0" width="9" height="12" fill="#fff"/><rect x="0" y="0.5" width="4.5" height="2" fill="#000"/><rect x="4.5" y="0.5" width="4" height="2" fill="#b8b8b8"/><path d="M0,4.5 H9 M0,10.5 H9 M2.5,3 V12 M6.5,3 V12" stroke="#505050" stroke-width="1" fill="none"/><rect x="2.5" y="6.3" width="4.5" height="2.4" fill="#fff" stroke="#000" stroke-width="1.2"/></svg>
<div class="a " style="left:113px;top:128px;width:1380px;height:2px;background:#fff;"></div>
<div class="a " style="left:113px;top:130px;width:1380px;height:1px;background:#808080;"></div>
<div class="a " style="left:113px;top:131px;width:1380px;height:1px;background:#606060;"></div>
<div class="a " style="left:113px;top:132px;width:1380px;height:15px;background:#9caab6;"></div>
<div class="a " style="left:113px;top:147px;width:1380px;height:1px;background:#808080;"></div>
<div class="a " style="left:201px;top:132px;width:1px;height:16px;background:#808080;"></div>
<div class="a t" style="top:133px;right:1295px;text-align:right;">4610</div>
<div class="a " style="left:285px;top:132px;width:1px;height:16px;background:#808080;"></div>
<div class="a t" style="top:133px;left:205px;">F</div>
<div class="a " style="left:380px;top:132px;width:1px;height:16px;background:#808080;"></div>
<div class="a t" style="top:133px;right:1116px;text-align:right;">400</div>
<div class="a " style="left:470px;top:132px;width:1px;height:16px;background:#808080;"></div>
<div class="a t" style="top:133px;left:384px;">Zíkazník č.400</div>
<div class="a " style="left:574px;top:132px;width:1px;height:16px;background:#808080;"></div>
<div class="a " style="left:730px;top:132px;width:1px;height:16px;background:#808080;"></div>
<div class="a t" style="top:133px;left:578px;">30.05.2022</div>
<div class="a " style="left:817px;top:132px;width:1px;height:16px;background:#808080;"></div>
<div class="a t" style="top:133px;left:734px;">30.05.2022</div>
<div class="a " style="left:904px;top:132px;width:1px;height:16px;background:#808080;"></div>
<div class="a t" style="top:133px;left:821px;">13.06.2022</div>
<div class="a " style="left:986px;top:132px;width:1px;height:16px;background:#808080;"></div>
<div class="a t" style="top:133px;right:510px;text-align:right;">605,00</div>
<div class="a " style="left:1076px;top:132px;width:1px;height:16px;background:#808080;"></div>
<div class="a t" style="top:133px;left:990px;">CZK</div>
<div class="a " style="left:1179px;top:132px;width:1px;height:16px;background:#808080;"></div>
<div class="a t" style="top:133px;left:1080px;">Příkaz k úhradě</div>
<div class="a " style="left:1305px;top:132px;width:1px;height:16px;background:#808080;"></div>
<div class="a t" style="top:133px;left:1183px;">neuhrazeno</div>
<div class="a " style="left:1395px;top:132px;width:1px;height:16px;background:#808080;"></div>
<div class="a t" style="top:133px;left:1309px;">rozúčtován</div>
<div class="a " style="left:1485px;top:132px;width:1px;height:16px;background:#808080;"></div>
<div class="a " style="left:1403px;top:133px;width:13px;height:13px;background:#f7f2f7;border:1px solid #c8c0c8;box-sizing:border-box;"></div>
<div class="a " style="left:1600px;top:132px;width:1px;height:16px;background:#808080;"></div>
<div class="a t" style="top:133px;left:1489px;">b</div>
<div class="a " style="left:113px;top:148px;width:1380px;height:15px;background:#fff;"></div>
<div class="a " style="left:113px;top:163px;width:1380px;height:1px;background:#808080;"></div>
<div class="a " style="left:201px;top:148px;width:1px;height:16px;background:#808080;"></div>
<div class="a t" style="top:149px;right:1295px;text-align:right;">4611</div>
<div class="a " style="left:285px;top:148px;width:1px;height:16px;background:#808080;"></div>
<div class="a t" style="top:149px;left:205px;">F</div>
<div class="a " style="left:380px;top:148px;width:1px;height:16px;background:#808080;"></div>
<div class="a t" style="top:149px;right:1116px;text-align:right;">400</div>
<div class="a " style="left:470px;top:148px;width:1px;height:16px;background:#808080;"></div>
<div class="a t" style="top:149px;left:384px;">Zíkazník č.400</div>
<div class="a " style="left:574px;top:148px;width:1px;height:16px;background:#808080;"></div>
<div class="a " style="left:730px;top:148px;width:1px;height:16px;background:#808080;"></div>
<div class="a t" style="top:149px;left:578px;">30.05.2022</div>
<div class="a " style="left:817px;top:148px;width:1px;height:16px;background:#808080;"></div>
<div class="a t" style="top:149px;left:734px;">30.05.2022</div>
<div class="a " style="left:904px;top:148px;width:1px;height:16px;background:#808080;"></div>
<div class="a t" style="top:149px;left:821px;">13.06.2022</div>
<div class="a " style="left:986px;top:148px;width:1px;height:16px;background:#808080;"></div>
<div class="a t" style="top:149px;right:510px;text-align:right;">-460,00</div>
<div class="a " style="left:1076px;top:148px;width:1px;height:16px;background:#808080;"></div>
<div class="a t" style="top:149px;left:990px;">CZK</div>
<div class="a " style="left:1179px;top:148px;width:1px;height:16px;background:#808080;"></div>
<div class="a t" style="top:149px;left:1080px;">Příkaz k úhradě</div>
<div class="a " style="left:1305px;top:148px;width:1px;height:16px;background:#808080;"></div>
<div class="a t" style="top:149px;left:1183px;">neuhrazeno</div>
<div class="a " style="left:1395px;top:148px;width:1px;height:16px;background:#808080;"></div>
<div class="a t" style="top:149px;left:1309px;">rozúčtován</div>
<div class="a " style="left:1485px;top:148px;width:1px;height:16px;background:#808080;"></div>
<div class="a " style="left:1403px;top:149px;width:13px;height:13px;background:#f7f2f7;border:1px solid #c8c0c8;box-sizing:border-box;"></div>
<svg class="a" style="left:1405px;top:151px" width="9" height="9"><path d="M1,4.5 L3.5,7.5 L8,1" stroke="#4a5a9a" stroke-width="1.8" fill="none"/></svg>
<div class="a " style="left:1600px;top:148px;width:1px;height:16px;background:#808080;"></div>
<div class="a t" style="top:149px;left:1489px;">b</div>
<div class="a " style="left:113px;top:164px;width:1380px;height:15px;background:#e6f7ff;"></div>
<div class="a " style="left:113px;top:179px;width:1380px;height:1px;background:#808080;"></div>
<div class="a " style="left:201px;top:164px;width:1px;height:16px;background:#808080;"></div>
<div class="a t" style="top:165px;right:1295px;text-align:right;">4613</div>
<div class="a " style="left:285px;top:164px;width:1px;height:16px;background:#808080;"></div>
<div class="a t" style="top:165px;left:205px;">F1</div>
<div class="a " style="left:380px;top:164px;width:1px;height:16px;background:#808080;"></div>
<div class="a t" style="top:165px;right:1116px;text-align:right;">1</div>
<div class="a " style="left:470px;top:164px;width:1px;height:16px;background:#808080;"></div>
<div class="a t" style="top:165px;left:384px;">Zakaznik - Mor...</div>
<div class="a " style="left:574px;top:164px;width:1px;height:16px;background:#808080;"></div>
<div class="a t" style="top:165px;left:474px;">MORAVSKÁ TŘEB...</div>
<div class="a " style="left:730px;top:164px;width:1px;height:16px;background:#808080;"></div>
<div class="a t" style="top:165px;left:578px;">01.06.2022</div>
<div class="a " style="left:817px;top:164px;width:1px;height:16px;background:#808080;"></div>
<div class="a t" style="top:165px;left:734px;">01.06.2022</div>
<div class="a " style="left:904px;top:164px;width:1px;height:16px;background:#808080;"></div>
<div class="a t" style="top:165px;left:821px;">25.05.2022</div>
<div class="a " style="left:986px;top:164px;width:1px;height:16px;background:#808080;"></div>
<div class="a t" style="top:165px;right:510px;text-align:right;">0,00</div>
<div class="a " style="left:1076px;top:164px;width:1px;height:16px;background:#808080;"></div>
<div class="a t" style="top:165px;left:990px;">CZK</div>
<div class="a " style="left:1179px;top:164px;width:1px;height:16px;background:#808080;"></div>
<div class="a " style="left:1305px;top:164px;width:1px;height:16px;background:#808080;"></div>
<div class="a t" style="top:165px;left:1183px;">neuhrazeno</div>
<div class="a " style="left:1395px;top:164px;width:1px;height:16px;background:#808080;"></div>
<div class="a " style="left:1485px;top:164px;width:1px;height:16px;background:#808080;"></div>
<div class="a " style="left:1403px;top:165px;width:13px;height:13px;background:#f7f2f7;border:1px solid #c8c0c8;box-sizing:border-box;"></div>
<div class="a " style="left:1600px;top:164px;width:1px;height:16px;background:#808080;"></div>
<div class="a t" style="top:165px;left:1489px;">b</div>
<div class="a " style="left:113px;top:180px;width:1380px;height:15px;background:#fff;"></div>
<div class="a " style="left:113px;top:195px;width:1380px;height:1px;background:#808080;"></div>
<div class="a " style="left:201px;top:180px;width:1px;height:16px;background:#808080;"></div>
<div class="a t" style="top:181px;right:1295px;text-align:right;">4614</div>
<div class="a " style="left:285px;top:180px;width:1px;height:16px;background:#808080;"></div>
<div class="a t" style="top:181px;left:205px;">F</div>
<div class="a " style="left:380px;top:180px;width:1px;height:16px;background:#808080;"></div>
<div class="a t" style="top:181px;right:1116px;text-align:right;">1</div>
<div class="a " style="left:470px;top:180px;width:1px;height:16px;background:#808080;"></div>
<div class="a t" style="top:181px;left:384px;">Zakaznik - Mor...</div>
<div class="a " style="left:574px;top:180px;width:1px;height:16px;background:#808080;"></div>
<div class="a t" style="top:181px;left:474px;">MORAVSKÁ TŘEB...</div>
<div class="a " style="left:730px;top:180px;width:1px;height:16px;background:#808080;"></div>
<div class="a t" style="top:181px;left:578px;">01.06.2022</div>
<div class="a " style="left:817px;top:180px;width:1px;height:16px;background:#808080;"></div>
<div class="a t" style="top:181px;left:734px;">01.06.2022</div>
<div class="a " style="left:904px;top:180px;width:1px;height:16px;background:#808080;"></div>
<div class="a t" style="top:181px;left:821px;">25.05.2022</div>
<div class="a " style="left:986px;top:180px;width:1px;height:16px;background:#808080;"></div>
<div class="a t" style="top:181px;right:510px;text-align:right;">0,00</div>
<div class="a " style="left:1076px;top:180px;width:1px;height:16px;background:#808080;"></div>
<div class="a t" style="top:181px;left:990px;">CZK</div>
<div class="a " style="left:1179px;top:180px;width:1px;height:16px;background:#808080;"></div>
<div class="a " style="left:1305px;top:180px;width:1px;height:16px;background:#808080;"></div>
<div class="a t" style="top:181px;left:1183px;">neuhrazeno</div>
<div class="a " style="left:1395px;top:180px;width:1px;height:16px;background:#808080;"></div>
<div class="a t" style="top:181px;left:1309px;">nerozúčtován</div>
<div class="a " style="left:1485px;top:180px;width:1px;height:16px;background:#808080;"></div>
<div class="a " style="left:1403px;top:181px;width:13px;height:13px;background:#f7f2f7;border:1px solid #c8c0c8;box-sizing:border-box;"></div>
<div class="a " style="left:1600px;top:180px;width:1px;height:16px;background:#808080;"></div>
<div class="a t" style="top:181px;left:1489px;">b</div>
<div class="a " style="left:113px;top:196px;width:1380px;height:15px;background:#e6f7ff;"></div>
<div class="a " style="left:113px;top:211px;width:1380px;height:1px;background:#808080;"></div>
<div class="a " style="left:201px;top:196px;width:1px;height:16px;background:#808080;"></div>
<div class="a t" style="top:197px;right:1295px;text-align:right;">2010480</div>
<div class="a " style="left:285px;top:196px;width:1px;height:16px;background:#808080;"></div>
<div class="a t" style="top:197px;left:205px;">Z</div>
<div class="a " style="left:380px;top:196px;width:1px;height:16px;background:#808080;"></div>
<div class="a t" style="top:197px;right:1116px;text-align:right;">400</div>
<div class="a " style="left:470px;top:196px;width:1px;height:16px;background:#808080;"></div>
<div class="a t" style="top:197px;left:384px;">Zíkazník č.400</div>
<div class="a " style="left:574px;top:196px;width:1px;height:16px;background:#808080;"></div>
<div class="a " style="left:730px;top:196px;width:1px;height:16px;background:#808080;"></div>
<div class="a t" style="top:197px;left:578px;">02.06.2022</div>
<div class="a " style="left:817px;top:196px;width:1px;height:16px;background:#808080;"></div>
<div class="a t" style="top:197px;left:734px;">02.06.2022</div>
<div class="a " style="left:904px;top:196px;width:1px;height:16px;background:#808080;"></div>
<div class="a t" style="top:197px;left:821px;">16.06.2022</div>
<div class="a " style="left:986px;top:196px;width:1px;height:16px;background:#808080;"></div>
<div class="a t" style="top:197px;right:510px;text-align:right;">1 250,00</div>
<div class="a " style="left:1076px;top:196px;width:1px;height:16px;background:#808080;"></div>
<div class="a t" style="top:197px;left:990px;">CZK</div>
<div class="a " style="left:1179px;top:196px;width:1px;height:16px;background:#808080;"></div>
<div class="a t" style="top:197px;left:1080px;">Příkaz k úhradě</div>
<div class="a " style="left:1305px;top:196px;width:1px;height:16px;background:#808080;"></div>
<div class="a t" style="top:197px;left:1183px;">neuhrazeno</div>
<div class="a " style="left:1395px;top:196px;width:1px;height:16px;background:#808080;"></div>
<div class="a t" style="top:197px;left:1309px;">rozúčtován...</div>
<div class="a " style="left:1485px;top:196px;width:1px;height:16px;background:#808080;"></div>
<div class="a " style="left:1403px;top:197px;width:13px;height:13px;background:#f7f2f7;border:1px solid #c8c0c8;box-sizing:border-box;"></div>
<div class="a " style="left:1600px;top:196px;width:1px;height:16px;background:#808080;"></div>
<div class="a t" style="top:197px;left:1489px;">z</div>
<div class="a " style="left:113px;top:212px;width:1380px;height:15px;background:#fff;"></div>
<div class="a " style="left:113px;top:227px;width:1380px;height:1px;background:#808080;"></div>
<div class="a " style="left:201px;top:212px;width:1px;height:16px;background:#808080;"></div>
<div class="a t" style="top:213px;right:1295px;text-align:right;">2010482</div>
<div class="a " style="left:285px;top:212px;width:1px;height:16px;background:#808080;"></div>
<div class="a t" style="top:213px;left:205px;">Z</div>
<div class="a " style="left:380px;top:212px;width:1px;height:16px;background:#808080;"></div>
<div class="a t" style="top:213px;right:1116px;text-align:right;">400</div>
<div class="a " style="left:470px;top:212px;width:1px;height:16px;background:#808080;"></div>
<div class="a t" style="top:213px;left:384px;">Zíkazník č.400</div>
<div class="a " style="left:574px;top:212px;width:1px;height:16px;background:#808080;"></div>
<div class="a " style="left:730px;top:212px;width:1px;height:16px;background:#808080;"></div>
<div class="a t" style="top:213px;left:578px;">02.06.2022</div>
<div class="a " style="left:817px;top:212px;width:1px;height:16px;background:#808080;"></div>
<div class="a t" style="top:213px;left:734px;">02.06.2022</div>
<div class="a " style="left:904px;top:212px;width:1px;height:16px;background:#808080;"></div>
<div class="a t" style="top:213px;left:821px;">16.06.2022</div>
<div class="a " style="left:986px;top:212px;width:1px;height:16px;background:#808080;"></div>
<div class="a t" style="top:213px;right:510px;text-align:right;">-2 500,00</div>
<div class="a " style="left:1076px;top:212px;width:1px;height:16px;background:#808080;"></div>
<div class="a t" style="top:213px;left:990px;">CZK</div>
<div class="a " style="left:1179px;top:212px;width:1px;height:16px;background:#808080;"></div>
<div class="a t" style="top:213px;left:1080px;">Příkaz k úhradě</div>
<div class="a " style="left:1305px;top:212px;width:1px;height:16px;background:#808080;"></div>
<div class="a t" style="top:213px;left:1183px;">neuhrazeno</div>
<div class="a " style="left:1395px;top:212px;width:1px;height:16px;background:#808080;"></div>
<div class="a t" style="top:213px;left:1309px;">rozúčtován...</div>
<div class="a " style="left:1485px;top:212px;width:1px;height:16px;background:#808080;"></div>
<div class="a " style="left:1403px;top:213px;width:13px;height:13px;background:#f7f2f7;border:1px solid #c8c0c8;box-sizing:border-box;"></div>
<div class="a " style="left:1600px;top:212px;width:1px;height:16px;background:#808080;"></div>
<div class="a t" style="top:213px;left:1489px;">z</div>
<div class="a " style="left:113px;top:228px;width:1380px;height:15px;background:#e6f7ff;"></div>
<div class="a " style="left:113px;top:243px;width:1380px;height:1px;background:#808080;"></div>
<div class="a " style="left:201px;top:228px;width:1px;height:16px;background:#808080;"></div>
<div class="a t" style="top:229px;right:1295px;text-align:right;">2010483</div>
<div class="a " style="left:285px;top:228px;width:1px;height:16px;background:#808080;"></div>
<div class="a t" style="top:229px;left:205px;">Z</div>
<div class="a " style="left:380px;top:228px;width:1px;height:16px;background:#808080;"></div>
<div class="a t" style="top:229px;right:1116px;text-align:right;">400</div>
<div class="a " style="left:470px;top:228px;width:1px;height:16px;background:#808080;"></div>
<div class="a t" style="top:229px;left:384px;">Zíkazník č.400</div>
<div class="a " style="left:574px;top:228px;width:1px;height:16px;background:#808080;"></div>
<div class="a " style="left:730px;top:228px;width:1px;height:16px;background:#808080;"></div>
<div class="a t" style="top:229px;left:578px;">02.06.2022</div>
<div class="a " style="left:817px;top:228px;width:1px;height:16px;background:#808080;"></div>
<div class="a t" style="top:229px;left:734px;">02.06.2022</div>
<div class="a " style="left:904px;top:228px;width:1px;height:16px;background:#808080;"></div>
<div class="a t" style="top:229px;left:821px;">16.06.2022</div>
<div class="a " style="left:986px;top:228px;width:1px;height:16px;background:#808080;"></div>
<div class="a t" style="top:229px;right:510px;text-align:right;">2 500,00</div>
<div class="a " style="left:1076px;top:228px;width:1px;height:16px;background:#808080;"></div>
<div class="a t" style="top:229px;left:990px;">CZK</div>
<div class="a " style="left:1179px;top:228px;width:1px;height:16px;background:#808080;"></div>
<div class="a t" style="top:229px;left:1080px;">Příkaz k úhradě</div>
<div class="a " style="left:1305px;top:228px;width:1px;height:16px;background:#808080;"></div>
<div class="a t" style="top:229px;left:1183px;">neuhrazeno</div>
<div class="a " style="left:1395px;top:228px;width:1px;height:16px;background:#808080;"></div>
<div class="a t" style="top:229px;left:1309px;">rozúčtován...</div>
<div class="a " style="left:1485px;top:228px;width:1px;height:16px;background:#808080;"></div>
<div class="a " style="left:1403px;top:229px;width:13px;height:13px;background:#f7f2f7;border:1px solid #c8c0c8;box-sizing:border-box;"></div>
<div class="a " style="left:1600px;top:228px;width:1px;height:16px;background:#808080;"></div>
<div class="a t" style="top:229px;left:1489px;">z</div>
<div class="a " style="left:113px;top:254px;width:1380px;height:16px;background:#e9e7e3;background-image:repeating-conic-gradient(#fff 0% 25%, #d6d3ce 0% 50%);background-size:2px 2px;"></div>
<div class="a " style="left:114px;top:255px;width:15px;height:15px;background:#d6d3ce;box-shadow: inset 1px 1px 0 #fff, inset -1px -1px 0 #404040, inset -2px -2px 0 #808080;"></div>
<svg class="a" style="left:119px;top:258px" width="4" height="7"><polygon points="4,0 4,7 0,3.5" fill="#404040"/></svg>
<div class="a " style="left:129px;top:255px;width:1207px;height:15px;background:#d6d3ce;box-shadow: inset 1px 1px 0 #fff, inset -1px -1px 0 #404040, inset -2px -2px 0 #808080;"></div>
<div class="a " style="left:114px;top:254px;width:1222px;height:1px;background:#d6d3ce;"></div>
<div class="a " style="left:110px;top:270px;width:1383px;height:3px;background:#fff;"></div>
<div class="a " style="left:110px;top:273px;width:1383px;height:3px;background:#d6d3ce;"></div>
<div class="a " style="left:110px;top:276px;width:1383px;height:1px;background:#404040;"></div>
<div class="a " style="left:110px;top:277px;width:1383px;height:1px;background:#808080;"></div>
<div class="a " style="left:111px;top:278px;width:1382px;height:1px;background:#404040;"></div>
<div class="a " style="left:110px;top:276px;width:1px;height:606px;background:#5a5850;"></div>
<div class="a " style="left:111px;top:276px;width:1px;height:606px;background:#808080;"></div>
<div class="a " style="left:112px;top:277px;width:1px;height:605px;background:#404040;"></div>
<div class="a " style="left:113px;top:401px;width:1px;height:481px;background:#fff;"></div>
<div class="a " style="left:115px;top:286px;width:345px;height:110px;border:1px solid #9cb8dc;border-radius:3px;box-shadow: inset 1px 1px 0 #fff, 1px 1px 0 #fff;box-sizing:border-box;"></div>
<div class="a t" style="top:293px;left:122px;">Prodejní objednávka</div>
<div class="a t" style="top:313px;left:122px;">Typ dokladu</div>
<div class="a t" style="top:333px;left:122px;">Středisko uživatele</div>
<div class="a t" style="top:353px;left:122px;">Středisko realizace</div>
<div class="a t" style="top:373px;left:122px;font-weight:bold;font-size:11px;">Číslo dokladu</div>
<div class="a " style="left:228px;top:289px;width:84px;height:19px;background:#e8e8e8;box-shadow: inset 1px 1px 0 #808080, inset -1px -1px 0 #fff, inset 2px 2px 0 #404040, inset -2px -2px 0 #d6d3ce;"></div>
<div class="a " style="left:313px;top:289px;width:15px;height:19px;background:#a0a0a0;box-shadow: inset 1px 1px 0 #fff, inset -1px -1px 0 #505050;"></div>
<svg class="a" style="left:317px;top:294px" width="7" height="9"><rect x="2" y="0" width="3" height="3" fill="#8a8a8a"/><polygon points="0,3 7,3 3.5,7" fill="#8a8a8a"/><rect x="0" y="7.6" width="7" height="1" fill="#8c8c8c"/></svg>
<div class="a t" style="top:293px;right:1186px;text-align:right;">6090</div>
<div class="a " style="left:228px;top:309px;width:34px;height:19px;background:#e8e8e8;box-shadow: inset 1px 1px 0 #808080, inset -1px -1px 0 #fff, inset 2px 2px 0 #404040, inset -2px -2px 0 #d6d3ce;"></div>
<div class="a " style="left:263px;top:309px;width:15px;height:19px;background:#a0a0a0;box-shadow: inset 1px 1px 0 #fff, inset -1px -1px 0 #505050;"></div>
<svg class="a" style="left:267px;top:314px" width="7" height="9"><rect x="2" y="0" width="3" height="3" fill="#8a8a8a"/><polygon points="0,3 7,3 3.5,7" fill="#8a8a8a"/><rect x="0" y="7.6" width="7" height="1" fill="#8c8c8c"/></svg>
<div class="a t" style="top:313px;left:231px;">F</div>
<div class="a t" style="top:313px;left:292px;color:#800080;">Daňový doklad / Faktura</div>
<div class="a " style="left:228px;top:329px;width:99px;height:19px;background:#e8e8e8;box-shadow: inset 1px 1px 0 #808080, inset -1px -1px 0 #fff, inset 2px 2px 0 #404040, inset -2px -2px 0 #d6d3ce;"></div>
<div class="a t" style="top:333px;left:231px;">20100</div>
<div class="a t" style="top:333px;left:332px;color:#800080;">název 20100</div>
<div class="a " style="left:228px;top:349px;width:84px;height:19px;background:#e8e8e8;box-shadow: inset 1px 1px 0 #808080, inset -1px -1px 0 #fff, inset 2px 2px 0 #404040, inset -2px -2px 0 #d6d3ce;"></div>
<div class="a " style="left:313px;top:349px;width:15px;height:19px;background:#a0a0a0;box-shadow: inset 1px 1px 0 #fff, inset -1px -1px 0 #505050;"></div>
<svg class="a" style="left:317px;top:354px" width="7" height="9"><rect x="2" y="0" width="3" height="3" fill="#8a8a8a"/><polygon points="0,3 7,3 3.5,7" fill="#8a8a8a"/><rect x="0" y="7.6" width="7" height="1" fill="#8c8c8c"/></svg>
<div class="a t" style="top:353px;left:231px;">20100</div>
<div class="a t" style="top:353px;left:332px;color:#800080;">název 20100</div>
<div class="a " style="left:228px;top:369px;width:84px;height:19px;background:#e8e8e8;box-shadow: inset 1px 1px 0 #808080, inset -1px -1px 0 #fff, inset 2px 2px 0 #404040, inset -2px -2px 0 #d6d3ce;"></div>
<div class="a t" style="top:373px;right:1186px;text-align:right;font-weight:bold;font-size:11px;">4610</div>
<div class="a " style="left:313px;top:369px;width:15px;height:19px;background:#d6d3ce;box-shadow: inset 1px 1px 0 #fff, inset -1px -1px 0 #505050, inset -2px -2px 0 #909090;"></div>
<svg class="a" style="left:315px;top:371px" width="11" height="15"><path d="M2,7.5 V5 A3.5,3.8 0 0 1 9,5 V7.5" stroke="#a6a6a6" stroke-width="1.1" fill="none"/><rect x="0.5" y="7.5" width="10" height="6" fill="#d9d6d0" stroke="#aaa" stroke-width="1"/><rect x="5" y="9.5" width="1" height="2.4" fill="#909090"/></svg>
<div class="a " style="left:465px;top:286px;width:695px;height:60px;border:1px solid #9cb8dc;border-radius:3px;box-shadow: inset 1px 1px 0 #fff, 1px 1px 0 #fff;box-sizing:border-box;"></div>
<div class="a t" style="top:293px;left:473px;">Odběratel</div>
<div class="a " style="left:613px;top:289px;width:100px;height:19px;background:#e8e8e8;box-shadow: inset 1px 1px 0 #808080, inset -1px -1px 0 #fff, inset 2px 2px 0 #404040, inset -2px -2px 0 #d6d3ce;"></div>
<div class="a t" style="top:293px;right:785px;text-align:right;">400</div>
<div class="a t" style="top:313px;left:473px;font-weight:bold;font-size:11px;color:#800080;">Zíkazník č.400</div>
<div class="a t" style="top:293px;left:753px;">Variabilní symbol</div>
<div class="a " style="left:843px;top:289px;width:100px;height:19px;background:#e8e8e8;box-shadow: inset 1px 1px 0 #808080, inset -1px -1px 0 #fff, inset 2px 2px 0 #404040, inset -2px -2px 0 #d6d3ce;"></div>
<div class="a t" style="top:293px;right:555px;text-align:right;">4610</div>
<div class="a t" style="top:313px;left:753px;">Hodnota</div>
<div class="a t" style="top:313px;left:803px;color:#800080;">CZK</div>
<div class="a " style="left:843px;top:309px;width:100px;height:19px;background:#e8e8e8;box-shadow: inset 1px 1px 0 #808080, inset -1px -1px 0 #fff, inset 2px 2px 0 #404040, inset -2px -2px 0 #d6d3ce;"></div>
<div class="a t" style="top:313px;right:555px;text-align:right;">605,00</div>
<div class="a t" style="top:293px;left:973px;">Datum vystavení</div>
<div class="a " style="left:1063px;top:289px;width:74px;height:19px;background:#e8e8e8;box-shadow: inset 1px 1px 0 #808080, inset -1px -1px 0 #fff, inset 2px 2px 0 #404040, inset -2px -2px 0 #d6d3ce;"></div>
<div class="a t" style="top:293px;left:1066px;">30.05.2022</div>
<div class="a t" style="top:313px;left:973px;">DUZP</div>
<div class="a " style="left:1063px;top:309px;width:74px;height:19px;background:#e8e8e8;box-shadow: inset 1px 1px 0 #808080, inset -1px -1px 0 #fff, inset 2px 2px 0 #404040, inset -2px -2px 0 #d6d3ce;"></div>
<div class="a t" style="top:313px;left:1066px;">30.05.2022</div>
<div class="a " style="left:1138px;top:289px;width:15px;height:19px;background:#a0a0a0;box-shadow: inset 1px 1px 0 #fff, inset -1px -1px 0 #505050;"></div>
<svg class="a" style="left:1141px;top:293px" width="9" height="11"><rect width="9" height="11" fill="#8c8c8c"/><path d="M3,2 V11 M6,2 V11 M0,4.5 H9 M0,7.5 H9" stroke="#a8a8a8" stroke-width="1"/></svg>
<div class="a " style="left:1138px;top:309px;width:15px;height:19px;background:#a0a0a0;box-shadow: inset 1px 1px 0 #fff, inset -1px -1px 0 #505050;"></div>
<svg class="a" style="left:1141px;top:313px" width="9" height="11"><rect width="9" height="11" fill="#8c8c8c"/><path d="M3,2 V11 M6,2 V11 M0,4.5 H9 M0,7.5 H9" stroke="#a8a8a8" stroke-width="1"/></svg>
<div class="a " style="left:114px;top:401px;width:115px;height:20px;background:#00ffff;"></div>
<div class="a " style="left:114px;top:400px;width:114px;height:1px;background:#fff;"></div>
<div class="a " style="left:114px;top:421px;width:271px;height:1px;background:#fff4f0;"></div>
<svg class="a" style="left:123px;top:402px" width="13" height="16"><rect x="0" y="0" width="13" height="16" fill="#fff" stroke="#9cc"/><rect x="1" y="3" width="10" height="12" fill="#3cb4e8"/><rect x="1" y="1" width="7" height="3" fill="#3cb4e8"/><circle cx="9.5" cy="3" r="1.6" fill="#111"/></svg>
<div class="a t" style="top:404px;left:141px;font-weight:bold;font-size:11px;">Základní údaje</div>
<div class="a " style="left:229px;top:402px;width:1px;height:19px;background:#404040;"></div>
<div class="a " style="left:230px;top:402px;width:64px;height:19px;background:#d6d3ce;border-radius:2px 2px 0 0;box-shadow: inset 1px 1px 0 #fff, inset -1px 0 0 #404040, inset -2px 0 0 #909090;"></div>
<div class="a " style="left:294px;top:402px;width:72px;height:19px;background:#d6d3ce;border-radius:2px 2px 0 0;box-shadow: inset 1px 1px 0 #fff, inset -1px 0 0 #404040, inset -2px 0 0 #909090;"></div>
<div class="a " style="left:366px;top:402px;width:35px;height:19px;background:#d6d3ce;border-radius:2px 2px 0 0;box-shadow: inset 1px 1px 0 #fff, inset -1px 0 0 #404040, inset -2px 0 0 #909090;"></div>
<svg class="a" style="left:235px;top:408px" width="16" height="9"><rect x="0.5" y="0.5" width="15" height="8" fill="#fff" stroke="#b0b0b0"/><rect x="2" y="2" width="2" height="2" fill="#e02020"/><path d="M6,4.5 H13 M6,6.5 H13" stroke="#808080"/></svg>
<div class="a t" style="top:405px;left:255px;">Adresy</div>
<svg class="a" style="left:299px;top:402px" width="18" height="18"><text font-family="Liberation Sans, sans-serif" transform="translate(-0.95,17.1) scale(0.8,1)" font-size="21" fill="#d8001c">1</text><text font-family="Liberation Sans, sans-serif" transform="translate(4.6,17.1) scale(0.95,1)" font-size="17.2" fill="#0a4ce8">2</text><text font-family="Liberation Sans, sans-serif" transform="translate(11.8,17.1) scale(0.92,1)" font-size="11.3" fill="#209050">3</text></svg>
<div class="a t" style="top:405px;left:320px;">Hodnoty</div>
<svg class="a" style="left:373px;top:406px" width="14" height="12"><rect x="0" y="0" width="14" height="2" fill="#204080"/><rect x="0" y="3" width="14" height="3" fill="#fff"/><rect x="2" y="6" width="12" height="4" fill="#f0a030"/><rect x="0" y="10" width="14" height="2" fill="#406090"/></svg>
<div class="a " style="left:117px;top:439px;width:400px;height:420px;border:1px solid #9cb8dc;border-radius:3px;box-shadow: inset 1px 1px 0 #fff, 1px 1px 0 #fff;box-sizing:border-box;"></div>
<div class="a " style="left:123px;top:434px;width:62px;height:12px;background:#d6d3ce;"></div>
<div class="a t" style="top:434px;left:125px;font-weight:bold;font-size:11px;">Odběratel</div>
<div class="a t" style="top:457px;left:125px;">Číslo firmy</div>
<div class="a " style="left:195px;top:453px;width:100px;height:19px;background:#e8e8e8;box-shadow: inset 1px 1px 0 #808080, inset -1px -1px 0 #fff, inset 2px 2px 0 #404040, inset -2px -2px 0 #d6d3ce;"></div>
<div class="a t" style="top:457px;left:198px;">400</div>
<div class="a " style="left:295px;top:453px;width:15px;height:19px;background:#a0a0a0;box-shadow: inset 1px 1px 0 #fff, inset -1px -1px 0 #505050;"></div>
<svg class="a" style="left:299px;top:458px" width="7" height="9"><rect x="2" y="0" width="3" height="3" fill="#8a8a8a"/><polygon points="0,3 7,3 3.5,7" fill="#8a8a8a"/><rect x="0" y="7.6" width="7" height="1" fill="#8c8c8c"/></svg>
<div class="a " style="left:315px;top:453px;width:20px;height:20px;background:#d6d3ce;box-shadow: inset 1px 1px 0 #fff, inset -1px -1px 0 #404040, inset -2px -2px 0 #808080;"></div>
<svg class="a" style="left:316px;top:454px" width="16" height="17"><path d="M14,9.5 A6,6 0 1 1 10.8,3.8" stroke="#b2b2b2" stroke-width="1.3" fill="none"/><polygon points="9,1.2 14.6,1.6 13.4,6.6" fill="#b8b8b8"/></svg>
<div class="a t" style="top:477px;left:125px;">IČO</div>
<div class="a " style="left:195px;top:473px;width:100px;height:19px;background:#e8e8e8;box-shadow: inset 1px 1px 0 #808080, inset -1px -1px 0 #fff, inset 2px 2px 0 #404040, inset -2px -2px 0 #d6d3ce;"></div>
<div class="a t" style="top:477px;right:1203px;text-align:right;">00000400</div>
<div class="a t" style="top:477px;left:324px;">DIČ</div>
<div class="a " style="left:355px;top:473px;width:100px;height:19px;background:#e8e8e8;box-shadow: inset 1px 1px 0 #808080, inset -1px -1px 0 #fff, inset 2px 2px 0 #404040, inset -2px -2px 0 #d6d3ce;"></div>
<div class="a t" style="top:477px;left:358px;">CZ00000400</div>
<div class="a t" style="top:497px;left:125px;">Jméno/Název</div>
<div class="a " style="left:195px;top:493px;width:260px;height:19px;background:#e8e8e8;box-shadow: inset 1px 1px 0 #808080, inset -1px -1px 0 #fff, inset 2px 2px 0 #404040, inset -2px -2px 0 #d6d3ce;"></div>
<div class="a t" style="top:497px;left:198px;">Zíkazník č.400</div>
<div class="a " style="left:195px;top:513px;width:260px;height:19px;background:#e8e8e8;box-shadow: inset 1px 1px 0 #808080, inset -1px -1px 0 #fff, inset 2px 2px 0 #404040, inset -2px -2px 0 #d6d3ce;"></div>
<div class="a " style="left:195px;top:533px;width:260px;height:19px;background:#e8e8e8;box-shadow: inset 1px 1px 0 #808080, inset -1px -1px 0 #fff, inset 2px 2px 0 #404040, inset -2px -2px 0 #d6d3ce;"></div>
<div class="a t" style="top:557px;left:125px;">Ulice</div>
<div class="a " style="left:195px;top:553px;width:260px;height:19px;background:#e8e8e8;box-shadow: inset 1px 1px 0 #808080, inset -1px -1px 0 #fff, inset 2px 2px 0 #404040, inset -2px -2px 0 #d6d3ce;"></div>
<div class="a t" style="top:597px;left:125px;">PSČ, Místo</div>
<div class="a " style="left:195px;top:593px;width:45px;height:19px;background:#e8e8e8;box-shadow: inset 1px 1px 0 #808080, inset -1px -1px 0 #fff, inset 2px 2px 0 #404040, inset -2px -2px 0 #d6d3ce;"></div>
<div class="a t" style="top:597px;left:198px;">571 01</div>
<div class="a " style="left:240px;top:593px;width:15px;height:19px;background:#a0a0a0;box-shadow: inset 1px 1px 0 #fff, inset -1px -1px 0 #505050;"></div>
<svg class="a" style="left:244px;top:598px" width="7" height="9"><rect x="2" y="0" width="3" height="3" fill="#8a8a8a"/><polygon points="0,3 7,3 3.5,7" fill="#8a8a8a"/><rect x="0" y="7.6" width="7" height="1" fill="#8c8c8c"/></svg>
<div class="a " style="left:285px;top:593px;width:170px;height:19px;background:#e8e8e8;box-shadow: inset 1px 1px 0 #808080, inset -1px -1px 0 #fff, inset 2px 2px 0 #404040, inset -2px -2px 0 #d6d3ce;"></div>
<div class="a t" style="top:617px;left:125px;">Země</div>
<div class="a " style="left:195px;top:613px;width:45px;height:19px;background:#e8e8e8;box-shadow: inset 1px 1px 0 #808080, inset -1px -1px 0 #fff, inset 2px 2px 0 #404040, inset -2px -2px 0 #d6d3ce;"></div>
<div class="a t" style="top:617px;left:198px;">CZ</div>
<div class="a " style="left:240px;top:613px;width:15px;height:19px;background:#a0a0a0;box-shadow: inset 1px 1px 0 #fff, inset -1px -1px 0 #505050;"></div>
<svg class="a" style="left:244px;top:618px" width="7" height="9"><rect x="2" y="0" width="3" height="3" fill="#8a8a8a"/><polygon points="0,3 7,3 3.5,7" fill="#8a8a8a"/><rect x="0" y="7.6" width="7" height="1" fill="#8c8c8c"/></svg>
<div class="a " style="left:285px;top:613px;width:170px;height:19px;background:#e8e8e8;box-shadow: inset 1px 1px 0 #808080, inset -1px -1px 0 #fff, inset 2px 2px 0 #404040, inset -2px -2px 0 #d6d3ce;"></div>
<div class="a t" style="top:617px;left:288px;">Česká republika</div>
<div class="a " style="left:122px;top:644px;width:390px;height:120px;border:1px solid #9cb8dc;border-radius:3px;box-shadow: inset 1px 1px 0 #fff, 1px 1px 0 #fff;box-sizing:border-box;"></div>
<div class="a " style="left:128px;top:638px;width:166px;height:12px;background:#d6d3ce;"></div>
<div class="a t" style="top:639px;left:130px;font-weight:bold;font-size:11px;">Bankovní spojení odběratele</div>
<div class="a " style="left:200px;top:658px;width:45px;height:19px;background:#e8e8e8;box-shadow: inset 1px 1px 0 #808080, inset -1px -1px 0 #fff, inset 2px 2px 0 #404040, inset -2px -2px 0 #d6d3ce;"></div>
<div class="a t" style="top:662px;right:1253px;text-align:right;">0</div>
<div class="a " style="left:245px;top:658px;width:15px;height:19px;background:#a0a0a0;box-shadow: inset 1px 1px 0 #fff, inset -1px -1px 0 #505050;"></div>
<svg class="a" style="left:249px;top:663px" width="7" height="9"><rect x="2" y="0" width="3" height="3" fill="#8a8a8a"/><polygon points="0,3 7,3 3.5,7" fill="#8a8a8a"/><rect x="0" y="7.6" width="7" height="1" fill="#8c8c8c"/></svg>
<div class="a t" style="top:682px;left:129px;">Číslo účtu</div>
<div class="a " style="left:200px;top:678px;width:150px;height:19px;background:#e8e8e8;box-shadow: inset 1px 1px 0 #808080, inset -1px -1px 0 #fff, inset 2px 2px 0 #404040, inset -2px -2px 0 #d6d3ce;"></div>
<div class="a t" style="top:682px;left:361px;">/</div>
<div class="a " style="left:370px;top:678px;width:60px;height:19px;background:#e8e8e8;box-shadow: inset 1px 1px 0 #808080, inset -1px -1px 0 #fff, inset 2px 2px 0 #404040, inset -2px -2px 0 #d6d3ce;"></div>
<div class="a t" style="top:702px;left:129px;">IBAN</div>
<div class="a " style="left:200px;top:698px;width:260px;height:19px;background:#e8e8e8;box-shadow: inset 1px 1px 0 #808080, inset -1px -1px 0 #fff, inset 2px 2px 0 #404040, inset -2px -2px 0 #d6d3ce;"></div>
<div class="a t" style="top:722px;left:129px;">Var.symbol</div>
<div class="a " style="left:200px;top:718px;width:150px;height:19px;background:#e8e8e8;box-shadow: inset 1px 1px 0 #808080, inset -1px -1px 0 #fff, inset 2px 2px 0 #404040, inset -2px -2px 0 #d6d3ce;"></div>
<div class="a t" style="top:722px;left:203px;">4610</div>
<div class="a t" style="top:742px;left:129px;">Konst.symbol</div>
<div class="a " style="left:200px;top:738px;width:45px;height:19px;background:#e8e8e8;box-shadow: inset 1px 1px 0 #808080, inset -1px -1px 0 #fff, inset 2px 2px 0 #404040, inset -2px -2px 0 #d6d3ce;"></div>
<div class="a " style="left:245px;top:738px;width:15px;height:19px;background:#a0a0a0;box-shadow: inset 1px 1px 0 #fff, inset -1px -1px 0 #505050;"></div>
<svg class="a" style="left:249px;top:743px" width="7" height="9"><rect x="2" y="0" width="3" height="3" fill="#8a8a8a"/><polygon points="0,3 7,3 3.5,7" fill="#8a8a8a"/><rect x="0" y="7.6" width="7" height="1" fill="#8c8c8c"/></svg>
<div class="a " style="left:122px;top:774px;width:390px;height:81px;border:1px solid #9cb8dc;border-radius:3px;box-shadow: inset 1px 1px 0 #fff, 1px 1px 0 #fff;box-sizing:border-box;"></div>
<div class="a " style="left:128px;top:768px;width:126px;height:12px;background:#d6d3ce;"></div>
<div class="a t" style="top:769px;left:130px;font-weight:bold;font-size:11px;">Bankovní spojení naše</div>
<div class="a " style="left:200px;top:788px;width:45px;height:19px;background:#e8e8e8;box-shadow: inset 1px 1px 0 #808080, inset -1px -1px 0 #fff, inset 2px 2px 0 #404040, inset -2px -2px 0 #d6d3ce;"></div>
<div class="a t" style="top:792px;right:1253px;text-align:right;">1</div>
<div class="a " style="left:245px;top:788px;width:15px;height:19px;background:#a0a0a0;box-shadow: inset 1px 1px 0 #fff, inset -1px -1px 0 #505050;"></div>
<svg class="a" style="left:249px;top:793px" width="7" height="9"><rect x="2" y="0" width="3" height="3" fill="#8a8a8a"/><polygon points="0,3 7,3 3.5,7" fill="#8a8a8a"/><rect x="0" y="7.6" width="7" height="1" fill="#8c8c8c"/></svg>
<div class="a t" style="top:812px;left:129px;">Číslo účtu</div>
<div class="a " style="left:200px;top:808px;width:150px;height:19px;background:#e8e8e8;box-shadow: inset 1px 1px 0 #808080, inset -1px -1px 0 #fff, inset 2px 2px 0 #404040, inset -2px -2px 0 #d6d3ce;"></div>
<div class="a t" style="top:812px;left:203px;">9134140237</div>
<div class="a t" style="top:812px;left:361px;">/</div>
<div class="a " style="left:370px;top:808px;width:60px;height:19px;background:#e8e8e8;box-shadow: inset 1px 1px 0 #808080, inset -1px -1px 0 #fff, inset 2px 2px 0 #404040, inset -2px -2px 0 #d6d3ce;"></div>
<div class="a t" style="top:812px;left:373px;">0100</div>
<div class="a t" style="top:832px;left:129px;">IBAN</div>
<div class="a " style="left:200px;top:828px;width:260px;height:19px;background:#e8e8e8;box-shadow: inset 1px 1px 0 #808080, inset -1px -1px 0 #fff, inset 2px 2px 0 #404040, inset -2px -2px 0 #d6d3ce;"></div>
<div class="a t" style="top:832px;left:203px;">CZ7301000000009134140237</div>
<div class="a " style="left:384px;top:318px;width:1109px;height:560px;background:#d6d3ce;"></div>
<div class="a " style="left:385px;top:319px;width:1200px;height:1px;background:#fff;"></div>
<div class="a " style="left:385px;top:319px;width:1px;height:558px;background:#fff;"></div>
<div class="a " style="left:384px;top:877px;width:1200px;height:1px;background:#808080;"></div>
<div class="a " style="left:388px;top:322px;width:1110px;height:18px;background:#0a246a;"></div>
<div class="a t" style="top:325px;left:407px;font-weight:bold;font-size:11px;color:#fff;">Dodatečné slevy</div>
<div class="a " style="left:387px;top:341px;width:1110px;height:3px;background:#0a246a;"></div>
<div class="a " style="left:387px;top:341px;width:3px;height:536px;background:#0a246a;"></div>
<div class="a " style="left:387px;top:874px;width:1110px;height:3px;background:#0a246a;"></div>
<div class="a " style="left:392px;top:351px;width:1200px;height:66px;border:1px solid #9cb8dc;border-radius:3px;box-shadow: inset 1px 1px 0 #fff, 1px 1px 0 #fff;box-sizing:border-box;"></div>
<div class="a t" style="top:368px;left:400px;">Hodnota realizace</div>
<div class="a " style="left:550px;top:364px;width:120px;height:19px;background:#e8e8e8;box-shadow: inset 1px 1px 0 #808080, inset -1px -1px 0 #fff, inset 2px 2px 0 #404040, inset -2px -2px 0 #d6d3ce;"></div>
<div class="a t" style="top:368px;right:828px;text-align:right;">500,0000</div>
<div class="a t" style="top:388px;left:400px;">Hodnota dodatečných slev</div>
<div class="a " style="left:550px;top:384px;width:120px;height:19px;background:#e8e8e8;box-shadow: inset 1px 1px 0 #808080, inset -1px -1px 0 #fff, inset 2px 2px 0 #404040, inset -2px -2px 0 #d6d3ce;"></div>
<div class="a t" style="top:388px;right:828px;text-align:right;">1 050,0000</div>
<div class="a " style="left:387px;top:420px;width:1110px;height:3px;background:#0a246a;"></div>
<div class="a " style="left:387px;top:420px;width:6px;height:414px;background:#0a246a;"></div>
<div class="a " style="left:387px;top:831px;width:1110px;height:3px;background:#0a246a;"></div>
<div class="a " style="left:393px;top:423px;width:1100px;height:1px;background:#808080;"></div>
<div class="a " style="left:394px;top:424px;width:1100px;height:1px;background:#404040;"></div>
<div class="a " style="left:393px;top:423px;width:1px;height:407px;background:#808080;"></div>
<div class="a " style="left:394px;top:424px;width:1px;height:406px;background:#404040;"></div>
<div class="a " style="left:394px;top:829px;width:1100px;height:1px;background:#fff;"></div>
<div class="a " style="left:394px;top:830px;width:1100px;height:1px;background:#fff;"></div>
<div class="a " style="left:397px;top:427px;width:1px;height:39px;background:#808080;"></div>
<div class="a " style="left:401px;top:428px;width:29px;height:21px;background:#d6d3ce;box-shadow: inset 1px 1px 0 #fff, inset -1px -1px 0 #404040, inset -2px -2px 0 #808080;"></div>
<div class="a " style="left:430px;top:428px;width:29px;height:21px;background:#d6d3ce;box-shadow: inset 1px 1px 0 #fff, inset -1px -1px 0 #404040, inset -2px -2px 0 #808080;"></div>
<svg class="a" style="left:408px;top:431px" width="16" height="15"><defs><linearGradient id="gchk" x1="0" y1="1" x2="1" y2="0"><stop offset="0" stop-color="#169016"/><stop offset="0.45" stop-color="#3cb424"/><stop offset="1" stop-color="#98e634"/></linearGradient></defs><polygon points="0.7,8.8 2.9,7.1 6.6,9.6 13.4,1 14.6,1.4 14.2,5.8 6.5,13.6" fill="url(#gchk)"/></svg>
<svg class="a" style="left:437px;top:431px" width="15" height="15"><defs><linearGradient id="gx" x1="0" y1="0" x2="1" y2="1"><stop offset="0" stop-color="#cc0000"/><stop offset="0.6" stop-color="#f22800"/><stop offset="1" stop-color="#ff4a10"/></linearGradient></defs><path d="M2,2.4 L12.6,12.4 M12.6,2.4 L2,12.4" stroke="url(#gx)" stroke-width="3.1" fill="none"/></svg>
<div class="a t" style="top:452px;left:280px;width:300px;text-align:center;">Úpravy</div>
<div class="a " style="left:395px;top:469px;width:1100px;height:1px;background:#fff;"></div>
<div class="a " style="left:395px;top:470px;width:1100px;height:1px;background:#908e88;"></div>
<div class="a " style="left:395px;top:471px;width:1100px;height:1px;background:#646864;"></div>
<div class="a " style="left:395px;top:472px;width:364px;height:19px;background:#d6d3ce;box-shadow: inset 1px 1px 0 #fff, inset -1px -1px 0 #404040, inset -2px -2px 0 #808080;"></div>
<div class="a t" style="top:475px;left:398px;font-weight:bold;font-size:11px;">Katologová položka slevy</div>
<div class="a " style="left:759px;top:472px;width:196px;height:19px;background:#d6d3ce;box-shadow: inset 1px 1px 0 #fff, inset -1px -1px 0 #404040, inset -2px -2px 0 #808080;"></div>
<div class="a t" style="top:475px;left:762px;font-weight:bold;font-size:11px;">Název slevy</div>
<div class="a " style="left:955px;top:472px;width:164px;height:19px;background:#d6d3ce;box-shadow: inset 1px 1px 0 #fff, inset -1px -1px 0 #404040, inset -2px -2px 0 #808080;"></div>
<div class="a t" style="top:475px;left:958px;font-weight:bold;font-size:11px;">Typ slevy</div>
<div class="a " style="left:1119px;top:472px;width:111px;height:19px;background:#d6d3ce;box-shadow: inset 1px 1px 0 #fff, inset -1px -1px 0 #404040, inset -2px -2px 0 #808080;"></div>
<div class="a t" style="top:475px;left:1122px;font-weight:bold;font-size:11px;">Sleva</div>
<div class="a " style="left:1230px;top:472px;width:229px;height:19px;background:#d6d3ce;box-shadow: inset 1px 1px 0 #fff, inset -1px -1px 0 #404040, inset -2px -2px 0 #808080;"></div>
<div class="a t" style="top:475px;left:1233px;font-weight:bold;font-size:11px;">Hodnota slevy</div>
<div class="a " style="left:395px;top:491px;width:363px;height:19px;background:#fff;"></div>
<div class="a " style="left:758px;top:491px;width:1px;height:19px;background:#808080;"></div>
<div class="a t" style="top:494px;left:400px;">Začíná na</div>
<div class="a " style="left:736px;top:491px;width:19px;height:19px;background:#d6d3ce;box-shadow: inset 1px 1px 0 #fff, inset -1px -1px 0 #404040, inset -2px -2px 0 #808080;"></div>
<svg class="a" style="left:740px;top:498px" width="9" height="5"><polygon points="0,0 9,0 4.5,5" fill="#404040"/></svg>
<div class="a " style="left:759px;top:491px;width:195px;height:19px;background:#fff;"></div>
<div class="a " style="left:954px;top:491px;width:1px;height:19px;background:#808080;"></div>
<div class="a t" style="top:494px;left:764px;">Začíná na</div>
<div class="a " style="left:932px;top:491px;width:19px;height:19px;background:#d6d3ce;box-shadow: inset 1px 1px 0 #fff, inset -1px -1px 0 #404040, inset -2px -2px 0 #808080;"></div>
<svg class="a" style="left:936px;top:498px" width="9" height="5"><polygon points="0,0 9,0 4.5,5" fill="#404040"/></svg>
<div class="a " style="left:955px;top:491px;width:163px;height:19px;background:#fff;"></div>
<div class="a " style="left:1118px;top:491px;width:1px;height:19px;background:#808080;"></div>
<div class="a t" style="top:494px;left:960px;">Stejné</div>
<div class="a " style="left:1096px;top:491px;width:19px;height:19px;background:#d6d3ce;box-shadow: inset 1px 1px 0 #fff, inset -1px -1px 0 #404040, inset -2px -2px 0 #808080;"></div>
<svg class="a" style="left:1100px;top:498px" width="9" height="5"><polygon points="0,0 9,0 4.5,5" fill="#404040"/></svg>
<div class="a " style="left:1119px;top:491px;width:110px;height:19px;background:#fff;"></div>
<div class="a " style="left:1229px;top:491px;width:1px;height:19px;background:#808080;"></div>
<div class="a t" style="top:494px;left:1124px;">Stejné</div>
<div class="a " style="left:1207px;top:491px;width:19px;height:19px;background:#d6d3ce;box-shadow: inset 1px 1px 0 #fff, inset -1px -1px 0 #404040, inset -2px -2px 0 #808080;"></div>
<svg class="a" style="left:1211px;top:498px" width="9" height="5"><polygon points="0,0 9,0 4.5,5" fill="#404040"/></svg>
<div class="a " style="left:1230px;top:491px;width:228px;height:19px;background:#fff;"></div>
<div class="a " style="left:1458px;top:491px;width:1px;height:19px;background:#808080;"></div>
<div class="a t" style="top:494px;left:1235px;">Stejné</div>
<div class="a " style="left:1436px;top:491px;width:19px;height:19px;background:#d6d3ce;box-shadow: inset 1px 1px 0 #fff, inset -1px -1px 0 #404040, inset -2px -2px 0 #808080;"></div>
<svg class="a" style="left:1440px;top:498px" width="9" height="5"><polygon points="0,0 9,0 4.5,5" fill="#404040"/></svg>
<div class="a " style="left:395px;top:510px;width:1064px;height:1px;background:#808080;"></div>
<div class="a " style="left:395px;top:511px;width:1063px;height:17px;background:#ffffb0;"></div>
<div class="a " style="left:758px;top:511px;width:1px;height:17px;background:#808080;"></div>
<div class="a " style="left:954px;top:511px;width:1px;height:17px;background:#808080;"></div>
<div class="a " style="left:1118px;top:511px;width:1px;height:17px;background:#808080;"></div>
<div class="a " style="left:1229px;top:511px;width:1px;height:17px;background:#808080;"></div>
<div class="a " style="left:1458px;top:511px;width:1px;height:17px;background:#808080;"></div>
<div class="a " style="left:395px;top:528px;width:1100px;height:1px;background:#fff;"></div>
<div class="a " style="left:395px;top:529px;width:1100px;height:1px;background:#fff;"></div>
<div class="a " style="left:395px;top:530px;width:1100px;height:1px;background:#808080;"></div>
<div class="a " style="left:395px;top:531px;width:1100px;height:1px;background:#606060;"></div>
<div class="a " style="left:395px;top:532px;width:1063px;height:15px;background:#e6f7ff;"></div>
<div class="a " style="left:395px;top:547px;width:1064px;height:1px;background:#808080;"></div>
<div class="a " style="left:758px;top:532px;width:1px;height:16px;background:#808080;"></div>
<div class="a t" style="top:533px;left:398px;color:#0000ff;">SLEVA NA DOPRAVU</div>
<div class="a " style="left:954px;top:532px;width:1px;height:16px;background:#808080;"></div>
<div class="a " style="left:759px;top:532px;width:195px;height:15px;background:#ffff80;"></div>
<div class="a " style="left:762px;top:532px;width:118px;height:14px;background:#0a246a;"></div>
<div class="a t" style="top:533px;left:762px;color:#fff;">Sleva za vlastní dopravu</div>
<div class="a " style="left:1118px;top:532px;width:1px;height:16px;background:#808080;"></div>
<div class="a t" style="top:533px;left:958px;color:#0000ff;">H</div>
<div class="a " style="left:1229px;top:532px;width:1px;height:16px;background:#808080;"></div>
<div class="a t" style="top:533px;right:267px;text-align:right;color:#0000ff;">1 000,0000</div>
<div class="a " style="left:1458px;top:532px;width:1px;height:16px;background:#808080;"></div>
<div class="a t" style="top:533px;right:38px;text-align:right;color:#0000ff;">1 000,0000</div>
<div class="a " style="left:395px;top:548px;width:1063px;height:15px;background:#fff;"></div>
<div class="a " style="left:395px;top:563px;width:1064px;height:1px;background:#808080;"></div>
<div class="a " style="left:758px;top:548px;width:1px;height:16px;background:#808080;"></div>
<div class="a t" style="top:549px;left:398px;color:#000;">SLEVA NA MNOZSTVI</div>
<div class="a " style="left:954px;top:548px;width:1px;height:16px;background:#808080;"></div>
<div class="a " style="left:1118px;top:548px;width:1px;height:16px;background:#808080;"></div>
<div class="a t" style="top:549px;left:958px;color:#000;">P</div>
<div class="a " style="left:1229px;top:548px;width:1px;height:16px;background:#808080;"></div>
<div class="a t" style="top:549px;right:267px;text-align:right;color:#000;">10,0000</div>
<div class="a " style="left:1458px;top:548px;width:1px;height:16px;background:#808080;"></div>
<div class="a t" style="top:549px;right:38px;text-align:right;color:#000;">50,0000</div>
<div class="a " style="left:450px;top:841px;width:80px;height:25px;background:#d6d3ce;box-shadow: inset 1px 1px 0 #fff, inset -1px -1px 0 #404040, inset -2px -2px 0 #808080;"></div>
<div class="a t" style="top:847px;left:340px;width:300px;text-align:center;">OK</div>
<div class="a " style="left:540px;top:841px;width:80px;height:25px;background:#d6d3ce;box-shadow: inset 1px 1px 0 #fff, inset -1px -1px 0 #404040, inset -2px -2px 0 #808080;"></div>
<div class="a t" style="top:847px;left:430px;width:300px;text-align:center;">Návrat</div>
</div></body></html>
